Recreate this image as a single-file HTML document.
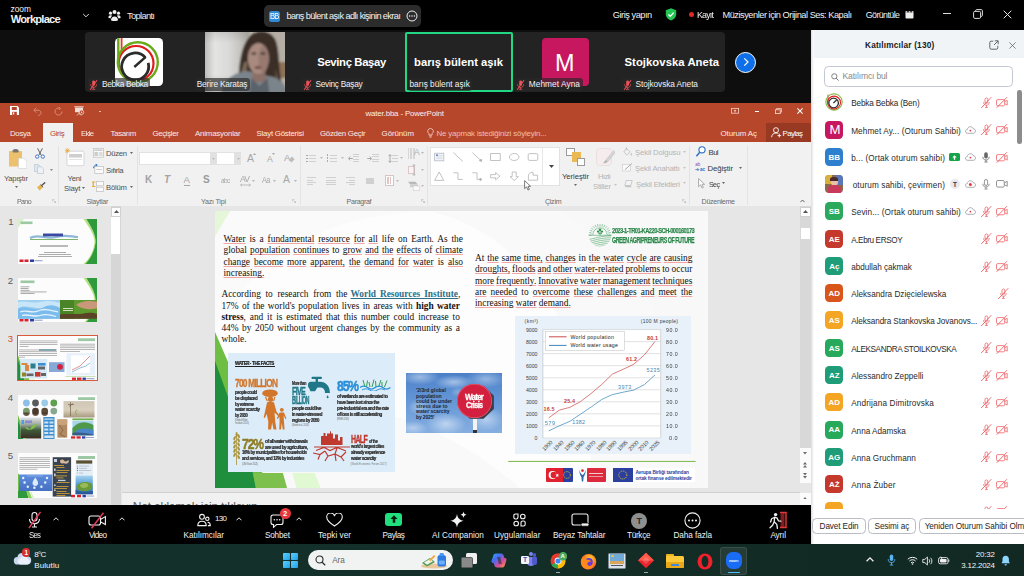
<!DOCTYPE html>
<html><head><meta charset="utf-8">
<style>
*{box-sizing:border-box;margin:0;padding:0}
html,body{width:1024px;height:576px;overflow:hidden;background:#0e0e0e;font-family:"Liberation Sans",sans-serif}
.a{position:absolute}
#root{position:relative;width:1024px;height:576px;overflow:hidden;background:#0e0e0e}
.t{position:absolute;white-space:nowrap;line-height:1}
.sq{text-decoration:underline;text-decoration-color:rgba(235,80,80,.5);text-decoration-thickness:.75px;text-underline-offset:1.3px;text-decoration-skip-ink:none}
</style></head><body>
<div id="root">
<!-- sec_top -->
<div class="a" style="left:0px;top:0px;width:1024px;height:30px;background:#000;"></div>
<div class="t" style="left:10.50px;top:5.00px;font-size:8.4px;color:#f2f2f2;letter-spacing:-0.014px;">zoom</div>
<div class="t" style="left:10.75px;top:14.00px;font-size:11.2px;color:#f2f2f2;font-weight:bold;letter-spacing:-0.805px;">Workplace</div>
<svg class="a" style="left:82px;top:13px" width="8" height="6" viewBox="0 0 8 6"><path d="M1.200 1l2.800 2.800 2.800-2.800" fill="none" stroke="#ddd" stroke-width="1"/></svg>
<svg class="a" style="left:108px;top:9px" width="13" height="13" viewBox="0 0 13 13"><g fill="#f0f0f0"><circle cx="6.500" cy="3" r="2"/><circle cx="2.500" cy="4.200" r="1.600"/><circle cx="10.500" cy="4.200" r="1.600"/><path d="M3 11.300c0-2.300 1.400-3.800 3.500-3.800s3.500 1.500 3.500 3.800c0 .9-7 .9-7 0z"/><path d="M.4 8.600c0-1.600 1-2.400 2.200-2.400.7 0 1.300.2 1.700.6-.9.600-1.600 1.600-1.800 2.700-.9 0-2.100-.2-2.100-.9zM12.600 8.600c0-1.600-1-2.400-2.200-2.400-.7 0-1.300.2-1.700.6.900.6 1.600 1.600 1.800 2.700.9 0 2.100-.2 2.100-.9z"/></g></svg>
<div class="t" style="left:127.00px;top:11.00px;font-size:9.4px;color:#ececec;letter-spacing:-0.703px;">Toplantı</div>
<div class="a" style="left:263.5px;top:4.5px;width:157.5px;height:22.5px;background:#2c2c2c;border-radius:5px"></div>
<div class="a" style="left:269px;top:10.500px;width:11px;height:11px;background:#2f8ad8;border-radius:2.500px"></div>
<div class="t" style="left:270.00px;top:13.00px;font-size:8.2px;color:#fff;letter-spacing:-0.738px;transform:scaleX(0.9215);transform-origin:0 0;">BB</div>
<div class="t" style="left:286.50px;top:12.00px;font-size:9.2px;color:#f2f2f2;letter-spacing:-0.615px;">barış bülent aşık adlı kişinin ekraı</div>
<svg class="a" style="left:405.500px;top:10px" width="12" height="12" viewBox="0 0 12 12"><circle cx="6" cy="6" r="5" fill="none" stroke="#eee" stroke-width="1"/><circle cx="3.600" cy="6" r=".75" fill="#eee"/><circle cx="6" cy="6" r=".75" fill="#eee"/><circle cx="8.400" cy="6" r=".75" fill="#eee"/></svg>
<div class="t" style="left:612.75px;top:11.00px;font-size:9.2px;color:#f2f2f2;letter-spacing:-0.447px;">Giriş yapın</div>
<svg class="a" style="left:665px;top:8px" width="12" height="13" viewBox="0 0 12 13"><path d="M6 .3l5.200 1.900v4c0 3-2.300 5.300-5.200 6.300-2.900-1-5.200-3.300-5.200-6.300v-4z" fill="#23c552"/><path d="M3.400 6.400l1.900 1.900 3.400-3.700" fill="none" stroke="#fff" stroke-width="1.400"/></svg>
<div class="a" style="left:688.5px;top:11.8px;width:5.4px;height:5.4px;background:#e02828;border-radius:50%"></div>
<div class="t" style="left:696.50px;top:11.00px;font-size:9.2px;color:#f2f2f2;letter-spacing:-0.828px;transform:scaleX(0.9630);transform-origin:0 0;">Kayıt</div>
<div class="t" style="left:722.50px;top:11.00px;font-size:9.2px;color:#f2f2f2;letter-spacing:-0.458px;">Müzisyenler için Orijinal Ses: Kapalı</div>
<div class="t" style="left:865.75px;top:11.00px;font-size:8.8px;color:#f2f2f2;letter-spacing:-0.550px;">Görüntüle</div>
<svg class="a" style="left:905px;top:10.500px" width="9" height="8" viewBox="0 0 9 8"><rect x=".5" y="1.500" width="8" height="6" rx=".8" fill="#eee"/><rect x=".5" y=".2" width="1.800" height="1.500" fill="#eee"/><rect x="3.600" y=".2" width="1.800" height="1.500" fill="#eee"/><rect x="6.700" y=".2" width="1.800" height="1.500" fill="#eee"/></svg>
<div class="a" style="left:943px;top:13.3px;width:8px;height:1px;background:#ddd;"></div>
<svg class="a" style="left:972.500px;top:9px" width="10" height="10" viewBox="0 0 10 10"><rect x=".6" y="2.400" width="7" height="7" rx="1.200" fill="none" stroke="#ddd" stroke-width="1"/><path d="M2.600 2.200v-.6c0-.5.400-1 1-1h4.800c.5 0 1 .4 1 1v4.800c0 .5-.4 1-1 1h-.6" fill="none" stroke="#ddd" stroke-width="1"/></svg>
<svg class="a" style="left:1003px;top:9.500px" width="9" height="9" viewBox="0 0 9 9"><path d="M.7.700l7.600 7.600M8.300.7L.7 8.300" stroke="#e8e8e8" stroke-width="1"/></svg>
<!-- sec_gal -->
<div class="a" style="left:85px;top:32px;width:640px;height:60px;background:#232323;border-radius:4px"></div>
<div class="a" style="left:114.900px;top:38px;width:48.200px;height:47.900px;background:#fff;border-radius:4.500px;overflow:hidden"><svg width="48.200" height="47.900" viewBox="0 0 48.200 47.900"><path d="M6.600 0v12.400" stroke="#e8382a" stroke-width="1.800"/><circle cx="21.100" cy="25.400" r="17.400" fill="none" stroke="#e01b1b" stroke-width="2.200"/><path d="M3.300 0v29" stroke="#6aaa1a" stroke-width="2.400"/><circle cx="22.800" cy="24.200" r="20" fill="none" stroke="#6aaa1a" stroke-width="2.400"/><path d="M33.240 24.900A13.500 13.500 0 1 1 30.230 19.370" fill="none" stroke="#2b2b2b" stroke-width="2.800"/><path d="M19.300 29L30.800 18.800" stroke="#2b2b2b" stroke-width="2.400"/></svg></div>
<svg class="a" style="left:204.800px;top:32px" width="80.600" height="60" viewBox="0 0 80 60" preserveAspectRatio="none"><defs><linearGradient id="cur" x1="0" x2="1" y1="0" y2="0"><stop offset="0" stop-color="#b4b4b2"/><stop offset=".25" stop-color="#e4e4e4"/><stop offset=".55" stop-color="#dadad8"/><stop offset=".8" stop-color="#c6c4c0"/><stop offset="1" stop-color="#b0aca4"/></linearGradient><linearGradient id="curv" x1="0" x2="0" y1="0" y2="1"><stop offset="0" stop-color="#000" stop-opacity=".12"/><stop offset=".2" stop-color="#000" stop-opacity="0"/><stop offset=".7" stop-color="#000" stop-opacity="0"/><stop offset="1" stop-color="#000" stop-opacity=".22"/></linearGradient><filter id="bl" x="-10%" y="-10%" width="120%" height="120%"><feGaussianBlur stdDeviation="1"/></filter><clipPath id="vc"><rect x="0" y="0" width="80" height="60"/></clipPath></defs><g clip-path="url(#vc)"><rect width="80" height="60" fill="#b9b5ad"/><g filter="url(#bl)"><rect x="-2" y="-2" width="46" height="64" fill="url(#cur)"/><rect x="-2" y="-2" width="46" height="64" fill="url(#curv)"/><rect x="62" y="-2" width="20" height="64" fill="#b4aea4"/><rect x="72" y="30" width="10" height="16" fill="#8c7256"/><path d="M34 62C32 40 35 16 43 6 50-3 65-3 70 8 75 20 72 42 79 62Z" fill="#3a2f28"/><path d="M39 30C36 40 33 50 31 62L40 62C40 50 41 40 42 30Z" fill="#7d6a58"/><path d="M70 36C72 46 74 52 78 62L70 62Z" fill="#6a5a4c"/><path d="M16 62C18 47 30 40 42 39L62 44C72 45 80 50 82 62Z" fill="#7c848b"/><rect x="47" y="38" width="13" height="12" fill="#8a7066"/><path d="M46 46L54 54 62 46 64 62 44 62Z" fill="#5a626a"/><ellipse cx="53" cy="26.500" rx="10.500" ry="15.500" fill="#a88a7f"/><ellipse cx="58" cy="27" rx="5" ry="13" fill="#97796f"/><ellipse cx="48.500" cy="21.500" rx="2.600" ry="1.200" fill="#4a3a36"/><ellipse cx="57.500" cy="21.500" rx="2.600" ry="1.200" fill="#4a3a36"/><ellipse cx="52.500" cy="35.500" rx="3.400" ry="1.300" fill="#6e423e"/><path d="M43 14C46 6 60 4 65 14 60 9 50 9 43 14Z" fill="#3a2f28"/></g></g></svg>
<div class="a" style="left:87.5px;top:78.2px;width:62.5px;height:13px;background:rgba(40,40,40,.66);border-radius:3px"></div>
<svg class="a" style="left:89.0px;top:79.600px" width="9" height="10" viewBox="0 0 9 10"><g><rect x="3.200" y=".6" width="2.800" height="5.200" rx="1.400" fill="#ee5358"/><path d="M1.600 4.300c0 2 1.300 3 3 3s3-1 3-3M4.600 7.300v1.900M3 9.300h3.200" fill="none" stroke="#ee5358" stroke-width=".8"/><path d="M8 .3L1.200 9.700" stroke="#ee5358" stroke-width="1.100"/></g></svg>
<div class="t" style="left:102.00px;top:80.00px;font-size:8.3px;color:#f2f2f2;letter-spacing:-0.313px;">Bebka Bebka</div>
<div class="a" style="left:194.5px;top:78.2px;width:55.5px;height:13px;background:rgba(40,40,40,.66);border-radius:3px"></div>
<div class="t" style="left:196.75px;top:80.00px;font-size:8.3px;color:#f2f2f2;letter-spacing:-0.177px;">Berire Karataş</div>
<div class="a" style="left:301px;top:78.2px;width:64px;height:13px;background:rgba(40,40,40,.66);border-radius:3px"></div>
<svg class="a" style="left:302.5px;top:79.600px" width="9" height="10" viewBox="0 0 9 10"><g><rect x="3.200" y=".6" width="2.800" height="5.200" rx="1.400" fill="#ee5358"/><path d="M1.600 4.300c0 2 1.300 3 3 3s3-1 3-3M4.600 7.300v1.900M3 9.300h3.200" fill="none" stroke="#ee5358" stroke-width=".8"/><path d="M8 .3L1.200 9.700" stroke="#ee5358" stroke-width="1.100"/></g></svg>
<div class="t" style="left:315.50px;top:80.00px;font-size:8.3px;color:#f2f2f2;letter-spacing:-0.276px;">Sevinç Başay</div>
<div class="t" style="left:317.25px;top:57.00px;font-size:11.3px;color:#fff;font-weight:bold;letter-spacing:-0.352px;">Sevinç Başay</div>
<div class="a" style="left:405px;top:32px;width:108px;height:60px;border:2px solid #22d784;border-radius:2px"></div>
<div class="t" style="left:414.00px;top:57.00px;font-size:11.3px;color:#fff;font-weight:bold;letter-spacing:-0.011px;">barış bülent aşık</div>
<div class="a" style="left:407.5px;top:78.2px;width:64.5px;height:13px;background:rgba(40,40,40,.66);border-radius:3px"></div>
<div class="t" style="left:409.50px;top:80.00px;font-size:8.3px;color:#f2f2f2;letter-spacing:-0.025px;">barış bülent aşık</div>
<div class="a" style="left:541.5px;top:38px;width:47.5px;height:48px;background:#c7175e;border-radius:4px"></div>
<div class="t" style="left:555.00px;top:52.00px;font-size:23.4px;color:#fff;letter-spacing:1.257px;">M</div>
<div class="a" style="left:514px;top:78.2px;width:69px;height:13px;background:rgba(40,40,40,.66);border-radius:3px"></div>
<svg class="a" style="left:515.5px;top:79.600px" width="9" height="10" viewBox="0 0 9 10"><g><rect x="3.200" y=".6" width="2.800" height="5.200" rx="1.400" fill="#ee5358"/><path d="M1.600 4.300c0 2 1.300 3 3 3s3-1 3-3M4.600 7.300v1.900M3 9.300h3.200" fill="none" stroke="#ee5358" stroke-width=".8"/><path d="M8 .3L1.200 9.700" stroke="#ee5358" stroke-width="1.100"/></g></svg>
<div class="t" style="left:528.75px;top:80.00px;font-size:8.3px;color:#f2f2f2;letter-spacing:0.065px;">Mehmet Ayna</div>
<div class="t" style="left:624.50px;top:57.00px;font-size:11.3px;color:#fff;font-weight:bold;letter-spacing:0.048px;">Stojkovska Aneta</div>
<div class="a" style="left:621px;top:78.2px;width:79.75px;height:13px;background:rgba(40,40,40,.66);border-radius:3px"></div>
<svg class="a" style="left:622.5px;top:79.600px" width="9" height="10" viewBox="0 0 9 10"><g><rect x="3.200" y=".6" width="2.800" height="5.200" rx="1.400" fill="#ee5358"/><path d="M1.600 4.300c0 2 1.300 3 3 3s3-1 3-3M4.600 7.300v1.900M3 9.300h3.200" fill="none" stroke="#ee5358" stroke-width=".8"/><path d="M8 .3L1.200 9.700" stroke="#ee5358" stroke-width="1.100"/></g></svg>
<div class="t" style="left:635.50px;top:80.00px;font-size:8.3px;color:#f2f2f2;letter-spacing:-0.078px;">Stojkovska Aneta</div>
<div class="a" style="left:734.500px;top:51.500px;width:21px;height:21px;border-radius:50%;background:#0e6fe8;border:1.500px solid #fff"></div>
<svg class="a" style="left:741.500px;top:57px" width="8" height="10" viewBox="0 0 8 10"><path d="M2.300 1.300l3.700 3.700-3.700 3.700" fill="none" stroke="#fff" stroke-width="1.200"/></svg>
<!-- sec_ppt -->
<div class="a" style="left:0px;top:102.8px;width:810.5px;height:40px;background:#b7472a;"></div>
<div class="a" style="left:0px;top:142.2px;width:810.5px;height:63.6px;background:#f1f1f1;"></div>
<div class="a" style="left:0px;top:205.6px;width:810.5px;height:0.8px;background:#dcdcdc;"></div>
<div class="a" style="left:0px;top:206.4px;width:810.5px;height:298.6px;background:#e6e6e6;"></div>
<svg class="a" style="left:10.400px;top:106.400px" width="9" height="9" viewBox="0 0 9 9"><path d="M0 0h7.500l1.500 1.500v7.500h-9z" fill="#fff"/><rect x="1.800" y="1" width="5" height="3" fill="#b7472a"/><rect x="2.200" y="5.800" width="4.600" height="3.200" fill="#b7472a"/><rect x="3" y="6.400" width="1.200" height="2" fill="#fff"/></svg>
<svg class="a" style="left:33px;top:106.500px" width="9" height="9" viewBox="0 0 9 9"><path d="M3.200.8L.8 3.200l2.400 2.400M1 3.200h4.200c1.600 0 2.800 1.200 2.800 2.600s-1.200 2.600-2.800 2.600" fill="none" stroke="#d88c76" stroke-width="1"/></svg>
<svg class="a" style="left:54px;top:106.500px" width="9" height="9" viewBox="0 0 9 9"><path d="M5.500 1.200a3.500 3.500 0 1 0 2.500 3.300M4.600.2l1.800 1.100-1.200 1.700" fill="none" stroke="#d88c76" stroke-width="1"/></svg>
<svg class="a" style="left:74.400px;top:106px" width="11" height="10" viewBox="0 0 11 10"><path d="M.3.800h9.400" stroke="#f3ddd6" stroke-width="1"/><rect x="1" y="1.600" width="8" height="4.600" fill="#f3ddd6"/><path d="M5 6.200v1.200M3 9.500l2-2.200 2 2.200" stroke="#f3ddd6" stroke-width=".8" fill="none"/><circle cx="7.600" cy="6.300" r="2.200" fill="#b7472a" stroke="#f3ddd6" stroke-width=".7"/><path d="M7 5.200l1.600 1.100-1.600 1.100z" fill="#f3ddd6"/></svg>
<div class="a" style="left:99.4px;top:110.6px;width:1.3px;height:1.3px;background:#f0d0c6;border-radius:50%"></div>
<div class="t" style="left:365.50px;top:110.00px;font-size:7.9px;color:#fbeeea;letter-spacing:-0.151px;">water.bba - PowerPoint</div>
<svg class="a" style="left:731px;top:108.400px" width="8" height="6" viewBox="0 0 8 6"><rect x=".4" y=".4" width="7.200" height="4.800" fill="none" stroke="#f0cdc3" stroke-width=".8"/><path d="M4 1.500l1.500 1.600h-3zM3.500 3h1v1.400h-1z" fill="#f0cdc3"/></svg>
<div class="a" style="left:754.6px;top:111px;width:4.2px;height:1px;background:#fff;"></div>
<svg class="a" style="left:775px;top:108px" width="7" height="6" viewBox="0 0 7 6"><rect x=".4" y="1.800" width="4.800" height="3.800" fill="none" stroke="#f6ddd6" stroke-width=".8"/><path d="M1.600 1.600v-1.200h4.800v3.800h-1.200" fill="none" stroke="#f6ddd6" stroke-width=".8"/></svg>
<svg class="a" style="left:796.500px;top:108px" width="6" height="6" viewBox="0 0 6 6"><path d="M.4.400l5.200 5.200M5.600.4L.4 5.600" stroke="#fff" stroke-width="1.100"/></svg>
<div class="a" style="left:42.6px;top:123px;width:30.4px;height:19.5px;background:#f1f1f1;"></div>
<div class="t" style="left:10.00px;top:130.00px;font-size:7.9px;color:#fbe9e4;letter-spacing:-0.348px;">Dosya</div>
<div class="t" style="left:50.00px;top:130.00px;font-size:7.9px;color:#b7472a;letter-spacing:-0.409px;">Giriş</div>
<div class="t" style="left:81.00px;top:130.00px;font-size:7.9px;color:#fbe9e4;letter-spacing:-0.711px;transform:scaleX(0.9822);transform-origin:0 0;">Ekle</div>
<div class="t" style="left:110.60px;top:130.00px;font-size:7.9px;color:#fbe9e4;letter-spacing:-0.382px;">Tasarım</div>
<div class="t" style="left:152.40px;top:130.00px;font-size:7.9px;color:#fbe9e4;letter-spacing:-0.339px;">Geçişler</div>
<div class="t" style="left:195.00px;top:130.00px;font-size:7.9px;color:#fbe9e4;letter-spacing:-0.206px;">Animasyonlar</div>
<div class="t" style="left:256.60px;top:130.00px;font-size:7.9px;color:#fbe9e4;letter-spacing:-0.252px;">Slayt Gösterisi</div>
<div class="t" style="left:320.00px;top:130.00px;font-size:7.9px;color:#fbe9e4;letter-spacing:-0.285px;">Gözden Geçir</div>
<div class="t" style="left:381.60px;top:130.00px;font-size:7.9px;color:#fbe9e4;letter-spacing:-0.089px;">Görünüm</div>
<svg class="a" style="left:427px;top:128px" width="7" height="10" viewBox="0 0 7 10"><path d="M3.500.5a2.800 2.800 0 0 0-1.600 5.100v1.400h3.200v-1.400a2.800 2.800 0 0 0-1.600-5.100zM2.200 8h2.600M2.600 9.200h1.800" fill="none" stroke="#f3d5cc" stroke-width=".8"/></svg>
<div class="t" style="left:436.60px;top:130.00px;font-size:7.9px;color:#eebfb1;letter-spacing:-0.179px;">Ne yapmak istediğinizi söyleyin...</div>
<div class="t" style="left:720.60px;top:130.00px;font-size:7.9px;color:#fbe9e4;letter-spacing:-0.115px;">Oturum Aç</div>
<div class="a" style="left:766px;top:123px;width:44.5px;height:19px;background:#983a23;"></div>
<svg class="a" style="left:770.500px;top:126.500px" width="11" height="11" viewBox="0 0 11 11"><circle cx="5" cy="3.200" r="2.500" fill="none" stroke="#fff" stroke-width=".9"/><path d="M.6 10.200c.2-2.600 1.800-4.200 4.400-4.200 1 0 1.800.2 2.400.6M8.300 6.800v3.600M6.500 8.600h3.600" fill="none" stroke="#fff" stroke-width=".9"/></svg>
<div class="t" style="left:782.60px;top:130.00px;font-size:7.9px;color:#fff;letter-spacing:-0.662px;">Paylaş</div>
<div class="a" style="left:58px;top:146px;width:0.9px;height:58.5px;background:#e3e3e3;"></div>
<div class="a" style="left:136.6px;top:146px;width:0.9px;height:58.5px;background:#e3e3e3;"></div>
<div class="a" style="left:300px;top:146px;width:0.9px;height:58.5px;background:#e3e3e3;"></div>
<div class="a" style="left:427px;top:146px;width:0.9px;height:58.5px;background:#e3e3e3;"></div>
<div class="a" style="left:689.4px;top:146px;width:0.9px;height:58.5px;background:#e3e3e3;"></div>
<div class="a" style="left:747.4px;top:146px;width:0.9px;height:58.5px;background:#e3e3e3;"></div>
<div class="t" style="left:17.00px;top:199.00px;font-size:7.1px;color:#6a6a6a;letter-spacing:-0.639px;transform:scaleX(0.9955);transform-origin:0 0;">Pano</div>
<div class="t" style="left:86.40px;top:199.00px;font-size:7.1px;color:#6a6a6a;letter-spacing:-0.239px;">Slaytlar</div>
<div class="t" style="left:201.00px;top:199.00px;font-size:7.1px;color:#6a6a6a;letter-spacing:-0.213px;">Yazı Tipi</div>
<div class="t" style="left:346.60px;top:199.00px;font-size:7.1px;color:#6a6a6a;letter-spacing:-0.319px;">Paragraf</div>
<div class="t" style="left:545.00px;top:199.00px;font-size:7.1px;color:#6a6a6a;letter-spacing:-0.287px;">Çizim</div>
<div class="t" style="left:701.60px;top:199.00px;font-size:7.1px;color:#6a6a6a;letter-spacing:-0.314px;">Düzenleme</div>
<svg class="a" style="left:51.6px;top:199.4px" width="4" height="4" viewBox="0 0 4 4"><path d="M.3 2.500v-2.200h2.200M1.500 1.500l2 2M3.700 2v1.700h-1.700" fill="none" stroke="#b0b0b0" stroke-width=".6"/></svg>
<svg class="a" style="left:292.4px;top:199.4px" width="4" height="4" viewBox="0 0 4 4"><path d="M.3 2.500v-2.200h2.200M1.500 1.500l2 2M3.700 2v1.700h-1.700" fill="none" stroke="#b0b0b0" stroke-width=".6"/></svg>
<svg class="a" style="left:420.6px;top:199.4px" width="4" height="4" viewBox="0 0 4 4"><path d="M.3 2.500v-2.200h2.200M1.500 1.500l2 2M3.700 2v1.700h-1.700" fill="none" stroke="#b0b0b0" stroke-width=".6"/></svg>
<svg class="a" style="left:682px;top:199.4px" width="4" height="4" viewBox="0 0 4 4"><path d="M.3 2.500v-2.200h2.200M1.500 1.500l2 2M3.700 2v1.700h-1.700" fill="none" stroke="#b0b0b0" stroke-width=".6"/></svg>
<svg class="a" style="left:799.500px;top:199px" width="5" height="4" viewBox="0 0 5 4"><path d="M.4 3.200l2.100-2.200 2.100 2.200" fill="none" stroke="#555" stroke-width=".9"/></svg>
<svg class="a" style="left:9px;top:148.500px" width="18" height="20" viewBox="0 0 18 20"><rect x="0" y="2" width="13" height="15.500" rx=".6" fill="#ecc06c"/><rect x="3.600" y=".6" width="6" height="3" rx=".8" fill="#777"/><rect x="5.400" y="0" width="2.400" height="1.600" fill="#777"/><path d="M9.500 9.200h5.200l3 3v7.300h-8.200z" fill="#fff" stroke="#c8c8c8" stroke-width=".5"/></svg>
<div class="t" style="left:4.00px;top:175.00px;font-size:7.7px;color:#505050;letter-spacing:-0.280px;">Yapıştır</div>
<svg class="a" style="left:14.899999999999999px;top:186.4px" width="3" height="2" viewBox="0 0 3 2"><path d="M0 0h3l-1.500 2z" fill="#666"/></svg>
<svg class="a" style="left:35px;top:147.600px" width="10" height="11" viewBox="0 0 10 11"><path d="M2.600.3l3.600 7M7.400.3l-3.600 7" stroke="#555" stroke-width=".9"/><circle cx="2.200" cy="8.600" r="1.700" fill="none" stroke="#3b6fc4" stroke-width=".9"/><circle cx="7.800" cy="8.600" r="1.700" fill="none" stroke="#3b6fc4" stroke-width=".9"/></svg>
<svg class="a" style="left:34px;top:164.400px" width="10" height="10" viewBox="0 0 10 10"><path d="M.5.500h4l2 2v5h-6z" fill="#dfe6ee" stroke="#b4c0cf" stroke-width=".6"/><path d="M3.500 2.800h4l2 2v4.700h-6z" fill="#eef2f6" stroke="#b4c0cf" stroke-width=".6"/></svg>
<svg class="a" style="left:49.5px;top:168.6px" width="3" height="2" viewBox="0 0 3 2"><path d="M0 0h3l-1.500 2z" fill="#888"/></svg>
<svg class="a" style="left:35.600px;top:182px" width="10" height="9" viewBox="0 0 10 9"><path d="M9.200.4l-3.600 3.200" stroke="#555" stroke-width="1.400"/><path d="M1 5.200l3.600-2.600 2.400 2.600-3.400 3.400z" fill="#e7b34f"/><path d="M4.600 2.600l2.400 2.600" stroke="#555" stroke-width="1"/></svg>
<svg class="a" style="left:64.500px;top:147.500px" width="20" height="19" viewBox="0 0 20 19"><rect x="2" y="3.200" width="17" height="14.500" rx="1" fill="#fff" stroke="#c9c9c9" stroke-width=".7"/><rect x="4" y="6" width="13" height="3.600" fill="#cfcfcf"/><rect x="4" y="11" width="13" height=".8" fill="#ddd"/><path d="M2.200 0v5.500M-.4 2.700h5.400M.4.800l3.800 3.800M4.200.8L.4 4.600" stroke="#e9a93a" stroke-width=".8"/></svg>
<div class="t" style="left:67.60px;top:175.00px;font-size:7.7px;color:#505050;letter-spacing:-0.235px;">Yeni</div>
<div class="t" style="left:64.00px;top:185.00px;font-size:7.7px;color:#505050;letter-spacing:-0.180px;">Slayt</div>
<svg class="a" style="left:82.1px;top:186.6px" width="3" height="2" viewBox="0 0 3 2"><path d="M0 0h3l-1.500 2z" fill="#666"/></svg>
<svg class="a" style="left:93px;top:148.400px" width="11" height="10" viewBox="0 0 11 10"><rect x=".4" y=".4" width="10.200" height="8.800" fill="#fafafa" stroke="#bdbdbd" stroke-width=".7"/><rect x="1.400" y="1.400" width="8.200" height="1.600" fill="#ccc"/><rect x="1.400" y="4" width="3.500" height="4" fill="#ccc"/><rect x="5.800" y="4" width="3.800" height="4" fill="#dcdcdc"/></svg>
<div class="t" style="left:106.00px;top:150.00px;font-size:7.7px;color:#505050;letter-spacing:-0.315px;">Düzen</div>
<svg class="a" style="left:129.5px;top:151.8px" width="3" height="2" viewBox="0 0 3 2"><path d="M0 0h3l-1.500 2z" fill="#666"/></svg>
<svg class="a" style="left:93px;top:164.400px" width="11" height="10" viewBox="0 0 11 10"><rect x="1.800" y="2.400" width="8.600" height="7" fill="#fafafa" stroke="#bdbdbd" stroke-width=".7"/><rect x="3.400" y="5" width="5.400" height="1" fill="#ccc"/><path d="M.6 4.200c0-2.200 1.600-3.400 3.400-3.400M2.600.1l1.600.8-1 1.400" fill="none" stroke="#2f71c2" stroke-width="1"/></svg>
<div class="t" style="left:106.00px;top:167.00px;font-size:7.7px;color:#505050;letter-spacing:-0.419px;">Sıfırla</div>
<svg class="a" style="left:92.400px;top:181px" width="12" height="11" viewBox="0 0 12 11"><rect x="4.400" y=".4" width="7" height="4.400" fill="#fafafa" stroke="#bdbdbd" stroke-width=".7"/><rect x="4.400" y="6.200" width="7" height="4.400" fill="#fafafa" stroke="#bdbdbd" stroke-width=".7"/><path d="M0 1h3.400M0 5.500h3.400" stroke="#e9a93a" stroke-width="1"/><rect x=".6" y="1" width="1.200" height="4.500" fill="#e9a93a"/></svg>
<div class="t" style="left:106.00px;top:184.00px;font-size:7.7px;color:#505050;letter-spacing:-0.207px;">Bölüm</div>
<svg class="a" style="left:129.5px;top:185.6px" width="3" height="2" viewBox="0 0 3 2"><path d="M0 0h3l-1.500 2z" fill="#666"/></svg>
<div class="a" style="left:138.6px;top:151.6px;width:72.6px;height:13.8px;background:#fff;border:.5px solid #e2e2e2"></div>
<div class="a" style="left:211px;top:151.6px;width:4.6px;height:13.8px;background:#e1e1e1;"></div>
<div class="a" style="left:216px;top:151.6px;width:19.2px;height:13.8px;background:#fff;border:.5px solid #e2e2e2"></div>
<div class="a" style="left:235.2px;top:151.6px;width:5.4px;height:13.8px;background:#e1e1e1;"></div>
<svg class="a" style="left:211.8px;top:157.6px" width="3" height="2" viewBox="0 0 3 2"><path d="M0 0h3l-1.500 2z" fill="#bdbdbd"/></svg>
<svg class="a" style="left:236.5px;top:157.6px" width="3" height="2" viewBox="0 0 3 2"><path d="M0 0h3l-1.500 2z" fill="#bdbdbd"/></svg>
<div class="t" style="left:247.00px;top:153.00px;font-size:10.5px;color:#a6a6a6;letter-spacing:-0.604px;">A</div>
<svg class="a" style="left:252.600px;top:152.500px" width="3" height="2" viewBox="0 0 3 2"><path d="M0 2h3l-1.500-2z" fill="#a6a6a6"/></svg>
<div class="t" style="left:267.00px;top:155.00px;font-size:8.6px;color:#a6a6a6;letter-spacing:-0.336px;">A</div>
<svg class="a" style="left:271.600px;top:153px" width="3" height="2" viewBox="0 0 3 2"><path d="M0 0h3l-1.500 2z" fill="#a6a6a6"/></svg>
<div class="t" style="left:284.00px;top:153.00px;font-size:9.5px;color:#a6a6a6;letter-spacing:-0.737px;">A</div>
<svg class="a" style="left:287.500px;top:156px" width="7" height="7" viewBox="0 0 7 7"><path d="M3.800.6l2.800 2.600-3 3.200-2.600-2.400z" fill="#bcbcbc"/></svg>
<div class="t" style="left:145.00px;top:175.00px;font-size:10px;color:#a3a3a3;font-weight:bold;letter-spacing:-0.822px;">K</div>
<div class="t" style="left:164.00px;top:175.00px;font-size:10px;color:#a3a3a3;font-weight:bold;font-style:italic;letter-spacing:0.891px;">T</div>
<div class="t" style="left:183.60px;top:175.00px;font-size:9.6px;color:#a6a6a6;letter-spacing:-0.404px;">A</div>
<div class="a" style="left:183.6px;top:184.6px;width:6px;height:0.8px;background:#a6a6a6;"></div>
<div class="t" style="left:203.00px;top:175.00px;font-size:10px;color:#9a9a9a;font-weight:bold;letter-spacing:-0.670px;">S</div>
<div class="t" style="left:220.60px;top:178.00px;font-size:6.8px;color:#a6a6a6;letter-spacing:-0.612px;transform:scaleX(0.9651);transform-origin:0 0;">abc</div>
<div class="t" style="left:240.00px;top:175.00px;font-size:9px;color:#a6a6a6;letter-spacing:-0.810px;transform:scaleX(0.9498);transform-origin:0 0;">AV</div>
<svg class="a" style="left:239.500px;top:183px" width="11" height="4" viewBox="0 0 11 4"><path d="M.6 2h9.800M2 .6L.6 2 2 3.400M9 .6l1.400 1.400L9 3.400" fill="none" stroke="#a6a6a6" stroke-width=".7"/></svg>
<svg class="a" style="left:252.1px;top:179.6px" width="3" height="2" viewBox="0 0 3 2"><path d="M0 0h3l-1.500 2z" fill="#b5b5b5"/></svg>
<div class="t" style="left:261.60px;top:176.00px;font-size:8.6px;color:#a6a6a6;letter-spacing:-0.774px;transform:scaleX(0.8619);transform-origin:0 0;">Aa</div>
<svg class="a" style="left:272.5px;top:179.6px" width="3" height="2" viewBox="0 0 3 2"><path d="M0 0h3l-1.500 2z" fill="#b5b5b5"/></svg>
<div class="t" style="left:283.00px;top:175.00px;font-size:10.4px;color:#a6a6a6;letter-spacing:-0.737px;">A</div>
<svg class="a" style="left:294.1px;top:179.6px" width="3" height="2" viewBox="0 0 3 2"><path d="M0 0h3l-1.500 2z" fill="#b5b5b5"/></svg>
<div class="a" style="left:306.4px;top:154.6px;width:1.2px;height:1.2px;background:#9c9c9c;border-radius:50%"></div>
<div class="a" style="left:306.4px;top:157.6px;width:1.2px;height:1.2px;background:#9c9c9c;border-radius:50%"></div>
<div class="a" style="left:306.4px;top:160.6px;width:1.2px;height:1.2px;background:#9c9c9c;border-radius:50%"></div>
<div class="a" style="left:309px;top:154.8px;width:7px;height:0.9px;background:#d0d0d0;"></div>
<div class="a" style="left:309px;top:157.8px;width:7px;height:0.9px;background:#d0d0d0;"></div>
<div class="a" style="left:309px;top:160.8px;width:7px;height:0.9px;background:#d0d0d0;"></div>
<svg class="a" style="left:319.5px;top:157.2px" width="3" height="2" viewBox="0 0 3 2"><path d="M0 0h3l-1.500 2z" fill="#bbb"/></svg>
<div class="a" style="left:327px;top:154.4px;width:1.2px;height:1.6px;background:#aaa;"></div>
<div class="a" style="left:327px;top:157.4px;width:1.2px;height:1.6px;background:#aaa;"></div>
<div class="a" style="left:327px;top:160.4px;width:1.2px;height:1.6px;background:#aaa;"></div>
<div class="a" style="left:330px;top:154.8px;width:7px;height:0.9px;background:#d0d0d0;"></div>
<div class="a" style="left:330px;top:157.8px;width:7px;height:0.9px;background:#d0d0d0;"></div>
<div class="a" style="left:330px;top:160.8px;width:7px;height:0.9px;background:#d0d0d0;"></div>
<svg class="a" style="left:340.5px;top:157.2px" width="3" height="2" viewBox="0 0 3 2"><path d="M0 0h3l-1.500 2z" fill="#bbb"/></svg>
<div class="a" style="left:352.5px;top:154.0px;width:6.5px;height:0.9px;background:#d0d0d0;"></div>
<div class="a" style="left:352.5px;top:156.3px;width:6.5px;height:0.9px;background:#d0d0d0;"></div>
<div class="a" style="left:352.5px;top:158.6px;width:6.5px;height:0.9px;background:#d0d0d0;"></div>
<div class="a" style="left:352.5px;top:160.9px;width:6.5px;height:0.9px;background:#d0d0d0;"></div>
<svg class="a" style="left:348.400px;top:155.500px" width="5" height="5" viewBox="0 0 5 5"><path d="M4.800 2.500h-4M2.200.6L.4 2.500l1.800 1.900" fill="none" stroke="#a8a8a8" stroke-width="1"/></svg>
<div class="a" style="left:372px;top:154.0px;width:6.5px;height:0.9px;background:#d0d0d0;"></div>
<div class="a" style="left:372px;top:156.3px;width:6.5px;height:0.9px;background:#d0d0d0;"></div>
<div class="a" style="left:372px;top:158.6px;width:6.5px;height:0.9px;background:#d0d0d0;"></div>
<div class="a" style="left:372px;top:160.9px;width:6.5px;height:0.9px;background:#d0d0d0;"></div>
<svg class="a" style="left:367.400px;top:155.500px" width="5" height="5" viewBox="0 0 5 5"><path d="M.2 2.500h4M2.800.6l1.800 1.900-1.800 1.900" fill="none" stroke="#a8a8a8" stroke-width="1"/></svg>
<svg class="a" style="left:387.500px;top:153.500px" width="4" height="9" viewBox="0 0 4 9"><path d="M2 .6v7.800M.5 2.200l1.500-1.600 1.500 1.600M.5 6.800l1.500 1.600 1.500-1.600" fill="none" stroke="#9a9a9a" stroke-width=".8"/></svg>
<div class="a" style="left:392px;top:154.8px;width:5.5px;height:0.9px;background:#d0d0d0;"></div>
<div class="a" style="left:392px;top:157.8px;width:5.5px;height:0.9px;background:#d0d0d0;"></div>
<div class="a" style="left:392px;top:160.8px;width:5.5px;height:0.9px;background:#d0d0d0;"></div>
<svg class="a" style="left:399.5px;top:157.2px" width="3" height="2" viewBox="0 0 3 2"><path d="M0 0h3l-1.500 2z" fill="#bbb"/></svg>
<div class="a" style="left:307.4px;top:177.4px;width:9px;height:0.9px;background:#d0d0d0;"></div>
<div class="a" style="left:307.4px;top:179.5px;width:6px;height:0.9px;background:#d0d0d0;"></div>
<div class="a" style="left:307.4px;top:181.6px;width:9px;height:0.9px;background:#d0d0d0;"></div>
<div class="a" style="left:307.4px;top:183.70000000000002px;width:6px;height:0.9px;background:#d0d0d0;"></div>
<div class="a" style="left:326.4px;top:177.4px;width:10px;height:0.9px;background:#d0d0d0;"></div>
<div class="a" style="left:326.4px;top:179.5px;width:10px;height:0.9px;background:#d0d0d0;"></div>
<div class="a" style="left:326.4px;top:181.6px;width:10px;height:0.9px;background:#d0d0d0;"></div>
<div class="a" style="left:326.4px;top:183.70000000000002px;width:10px;height:0.9px;background:#d0d0d0;"></div>
<div class="a" style="left:346px;top:177.4px;width:9px;height:0.9px;background:#d0d0d0;"></div>
<div class="a" style="left:349px;top:179.5px;width:6px;height:0.9px;background:#d0d0d0;"></div>
<div class="a" style="left:346px;top:181.6px;width:9px;height:0.9px;background:#d0d0d0;"></div>
<div class="a" style="left:349px;top:183.70000000000002px;width:6px;height:0.9px;background:#d0d0d0;"></div>
<div class="a" style="left:365.6px;top:177.6px;width:8px;height:6.4px;background:#d0d0d0;"></div>
<div class="a" style="left:385px;top:175.4px;width:8.6px;height:11px;background:#fdfdfd;border:.6px solid #d8c3c3"></div>
<div class="a" style="left:387px;top:177.4px;width:1.8px;height:7px;background:#e3c4c4;"></div>
<div class="a" style="left:389.6px;top:177.4px;width:1.8px;height:7px;background:#e3c4c4;"></div>
<svg class="a" style="left:396.1px;top:179.6px" width="3" height="2" viewBox="0 0 3 2"><path d="M0 0h3l-1.500 2z" fill="#bbb"/></svg>
<div class="a" style="left:408.0px;top:147.5px;width:0.7px;height:11px;background:#d6d6d6;"></div>
<div class="a" style="left:409.5px;top:147.5px;width:0.7px;height:11px;background:#d6d6d6;"></div>
<div class="a" style="left:411.0px;top:147.5px;width:0.7px;height:11px;background:#d6d6d6;"></div>
<div class="a" style="left:412.5px;top:147.5px;width:0.7px;height:11px;background:#d6d6d6;"></div>
<div class="a" style="left:414.0px;top:147.5px;width:0.7px;height:11px;background:#d6d6d6;"></div>
<div class="t" style="left:414.00px;top:148.00px;font-size:8.5px;color:#b0b0b0;letter-spacing:-0.070px;">A</div>
<svg class="a" style="left:420.9px;top:151.6px" width="3" height="2" viewBox="0 0 3 2"><path d="M0 0h3l-1.500 2z" fill="#bbb"/></svg>
<div class="a" style="left:408.4px;top:166px;width:7px;height:8px;background:#fbf3f3;border:.6px solid #dcc8c8"></div>
<svg class="a" style="left:411.500px;top:163.500px" width="4" height="12" viewBox="0 0 4 12"><path d="M2 .5v11M.6 2l1.400-1.500 1.400 1.500M.6 10l1.400 1.500 1.400-1.500" fill="none" stroke="#a9a9a9" stroke-width=".7"/></svg>
<svg class="a" style="left:420.9px;top:168.6px" width="3" height="2" viewBox="0 0 3 2"><path d="M0 0h3l-1.500 2z" fill="#bbb"/></svg>
<svg class="a" style="left:408px;top:181px" width="13" height="10" viewBox="0 0 13 10"><path d="M0 .8h7.500l2.200 2.800h-7.500z" fill="#b9b9b9"/><path d="M2 3.800h8v2.400h-8z" fill="#cfcfcf"/><rect x="5.200" y="5" width="6.600" height="4.400" fill="#fafafa" stroke="#d9c9c9" stroke-width=".6"/></svg>
<svg class="a" style="left:420.9px;top:185.4px" width="3" height="2" viewBox="0 0 3 2"><path d="M0 0h3l-1.500 2z" fill="#bbb"/></svg>
<div class="a" style="left:429.6px;top:147.4px;width:130.4px;height:38.8px;background:#fff;border:.8px solid #e2e2e2"></div>
<div class="a" style="left:542.4px;top:147.8px;width:0.8px;height:38px;background:#e6e6e6;"></div>
<svg class="a" style="left:549px;top:165px" width="5" height="3" viewBox="0 0 5 3"><path d="M0 0h5l-2.500 3z" fill="#444"/></svg>
<svg class="a" style="left:430px;top:148px" width="112" height="38" viewBox="430 148 112 38"><g fill="none" stroke="#b4b4b4" stroke-width=".8"><rect x="434.600" y="153.200" width="9.200" height="7.600" fill="#f4f6fa" stroke="#b5b9c4"/><path d="M436 155.400h6.400M436 157h6.400M436 158.600h6.400" stroke="#c8ccd6" stroke-width=".6"/><rect x="436" y="154.400" width="2" height="1.600" fill="#6d8fd0" stroke="none"/><path d="M453.400 152.600l9.400 8.800"/><path d="M472.400 152.600l9.200 8.600"/><path d="M481.800 161.400l-2.400-.6 1.800-1.800z" fill="#ababab"/><rect x="490.600" y="153.600" width="9.600" height="6.800"/><ellipse cx="514.200" cy="157" rx="4.800" ry="3.500"/><rect x="528.200" y="153.600" width="9.600" height="6.800" rx="1.200"/><path d="M439.200 172l4.600 8.400h-9.200z"/><path d="M453.400 172.800h4.600v6.600h4.800"/><path d="M472.400 172.800h4.600v6.600h4"/><path d="M482 179.400l-2-1.300v2.600z" fill="#ababab"/><path d="M490.600 174.600h5v-2l4.400 3.600-4.400 3.600v-2h-5z"/><path d="M512.200 172h4v4.600h2.200l-4.200 4-4.200-4h2.200z"/><path d="M528.400 180.200v-5.400c1.200-2.200 3.200-2.600 4.600-2.600v3h4.600v5z"/></g></svg>
<svg class="a" style="left:523.500px;top:179.500px" width="8" height="11" viewBox="0 0 8 11"><path d="M.6.600v8l2-1.800 1.400 3.200 1.400-.6-1.400-3.100h2.600z" fill="#fff" stroke="#444" stroke-width=".7"/></svg>
<div class="a" style="left:566.4px;top:148.2px;width:8.2px;height:8.2px;background:#fff;border:.7px solid #9a9a9a"></div>
<div class="a" style="left:571.6px;top:152.4px;width:9.4px;height:9.4px;background:#ebb954;"></div>
<div class="a" style="left:577px;top:158px;width:7.6px;height:7.8px;background:#fff;border:.7px solid #9a9a9a"></div>
<div class="t" style="left:562.00px;top:173.00px;font-size:7.7px;color:#3a3a3a;letter-spacing:-0.067px;">Yerleştir</div>
<svg class="a" style="left:574.1px;top:184.2px" width="3" height="2" viewBox="0 0 3 2"><path d="M0 0h3l-1.500 2z" fill="#666"/></svg>
<svg class="a" style="left:596px;top:148px" width="19" height="20" viewBox="0 0 19 20"><rect x=".5" y=".5" width="15" height="17" rx="3" fill="#f6ecee" stroke="#e4dcdc" stroke-width=".8"/><path d="M17.800 2.500l-8 9.500-1.200 3.200 3.200-1.400 7-8.800z" fill="#d4d4d4" stroke="#bdbdbd" stroke-width=".5"/><path d="M9.800 12l-3 3.500 4.800-1.800z" fill="#b0b0b0"/></svg>
<div class="t" style="left:598.00px;top:173.00px;font-size:7.7px;color:#b4b4b4;letter-spacing:-0.600px;">Hızlı</div>
<div class="t" style="left:593.00px;top:183.00px;font-size:7.7px;color:#b4b4b4;letter-spacing:-0.209px;">Stiller</div>
<svg class="a" style="left:613.5px;top:184.2px" width="3" height="2" viewBox="0 0 3 2"><path d="M0 0h3l-1.500 2z" fill="#c4c4c4"/></svg>
<svg class="a" style="left:623.400px;top:146.500px" width="10" height="10" viewBox="0 0 10 10"><path d="M3.400 1.200l3.600 3.600-3 3.400-3.200-3.200z" fill="none" stroke="#bfbfbf" stroke-width=".8"/><path d="M3.400.2v3" stroke="#bfbfbf" stroke-width=".8"/><path d="M8.400 5.600c.6 1 .9 1.600.9 2.100a.9.900 0 0 1-1.800 0c0-.5.300-1.100.9-2.100z" fill="#c9c9c9"/></svg>
<div class="t" style="left:635.00px;top:149.00px;font-size:7.7px;color:#b4b4b4;letter-spacing:-0.123px;">Şekil Dolgusu</div>
<svg class="a" style="left:682.9px;top:150.6px" width="3" height="2" viewBox="0 0 3 2"><path d="M0 0h3l-1.500 2z" fill="#c4c4c4"/></svg>
<svg class="a" style="left:622px;top:163px" width="11" height="9" viewBox="0 0 11 9"><rect x=".4" y="1.400" width="8" height="6.600" fill="#fafafa" stroke="#cfcfcf" stroke-width=".7"/><path d="M3 6.600l6.800-6" stroke="#a8a8a8" stroke-width="1"/></svg>
<div class="t" style="left:635.00px;top:165.00px;font-size:7.7px;color:#b4b4b4;letter-spacing:-0.161px;">Şekil Anahattı</div>
<svg class="a" style="left:682.9px;top:166.6px" width="3" height="2" viewBox="0 0 3 2"><path d="M0 0h3l-1.500 2z" fill="#c4c4c4"/></svg>
<svg class="a" style="left:624px;top:179.500px" width="9" height="8" viewBox="0 0 9 8"><path d="M2.200.5h6l-1.400 5h-6z" fill="#f4f4f4" stroke="#bcbcbc" stroke-width=".7"/><path d="M.8 5.500l1 1.800h5.600l-.6-1.800z" fill="#c4c4c4"/></svg>
<div class="t" style="left:636.00px;top:181.00px;font-size:7.7px;color:#b4b4b4;letter-spacing:-0.189px;">Şekil Efektleri</div>
<svg class="a" style="left:682.9px;top:182.4px" width="3" height="2" viewBox="0 0 3 2"><path d="M0 0h3l-1.500 2z" fill="#c4c4c4"/></svg>
<svg class="a" style="left:696px;top:146.400px" width="10" height="11" viewBox="0 0 10 11"><circle cx="6" cy="3.800" r="3.100" fill="#fff" stroke="#2e6fc0" stroke-width="1.100"/><path d="M3.800 6.200l-3.400 4" stroke="#2e6fc0" stroke-width="1.400"/></svg>
<div class="t" style="left:708.60px;top:149.00px;font-size:7.8px;color:#3a3a3a;letter-spacing:-0.637px;">Bul</div>
<svg class="a" style="left:694.600px;top:162.400px" width="11" height="10" viewBox="0 0 11 10"><text x=".2" y="4" font-size="4.600" font-family="Liberation Sans" fill="#8a4fb0">ab</text><text x="5" y="9.400" font-size="4.600" font-family="Liberation Sans" fill="#2e6fc0" font-weight="bold">ac</text><path d="M.4 7.600h3.200M2.400 6.200l1.400 1.400-1.400 1.400" fill="none" stroke="#2e6fc0" stroke-width=".8"/></svg>
<div class="t" style="left:707.60px;top:165.00px;font-size:7.8px;color:#3a3a3a;letter-spacing:-0.149px;">Değiştir</div>
<svg class="a" style="left:738.9px;top:167px" width="3" height="2" viewBox="0 0 3 2"><path d="M0 0h3l-1.500 2z" fill="#666"/></svg>
<svg class="a" style="left:697.500px;top:177.500px" width="8" height="11" viewBox="0 0 8 11"><path d="M.6.600v8l2-1.800 1.400 3.200 1.400-.6-1.400-3.100h2.600z" fill="#fff" stroke="#8c8c8c" stroke-width=".7"/></svg>
<div class="t" style="left:708.60px;top:181.00px;font-size:7.8px;color:#3a3a3a;letter-spacing:-0.702px;transform:scaleX(0.9139);transform-origin:0 0;">Seç</div>
<svg class="a" style="left:722.1px;top:182.2px" width="3" height="2" viewBox="0 0 3 2"><path d="M0 0h3l-1.500 2z" fill="#666"/></svg>
<!-- sec_slide -->
<div class="a" style="left:110.7px;top:206px;width:10.3px;height:299px;background:#d6d6d6;"></div>
<div class="a" style="left:110.7px;top:206.5px;width:10.3px;height:10.4px;background:#fdfdfd;border:.5px solid #d0d0d0"></div>
<svg class="a" style="left:113.500px;top:210px" width="5" height="3" viewBox="0 0 5 3"><path d="M0 3h5l-2.500-3z" fill="#555"/></svg>
<div class="a" style="left:111.2px;top:217px;width:9.3px;height:36.7px;background:#fff;"></div>
<div class="t" style="left:8.20px;top:217.00px;font-size:9.6px;color:#5a5a5a;">1</div>
<div class="t" style="left:7.80px;top:276.00px;font-size:9.6px;color:#5a5a5a;">2</div>
<div class="t" style="left:7.80px;top:334.00px;font-size:9.6px;color:#d0502c;">3</div>
<div class="t" style="left:7.80px;top:393.00px;font-size:9.6px;color:#5a5a5a;">4</div>
<div class="t" style="left:7.80px;top:451.00px;font-size:9.6px;color:#5a5a5a;">5</div>
<div class="a" style="left:17.600px;top:219.2px;width:79.600px;height:44.600px;background:#fcfcfc;overflow:hidden;"><svg class="a" style="left:0;top:0" width="80" height="45" viewBox="0 0 80 45"><path d="M65.500 0C74 12 77.500 19 76.300 25 75 34 71 40 65.500 45L68 45C73 40 76.500 34 77.300 25 78.500 19 76 12 68.400 0Z" fill="#b4e07c"/><path d="M68.400 0C76 12 78.500 19 77.300 25 76 34 72 40 67.500 45L80 45 80 0Z" fill="#2f9a3c"/><path d="M0 0h6l-6 9z" fill="#d8efc8"/><rect x="2.500" y="2.500" width="12" height="2.600" fill="#9cc9a4"/><path d="M12 19c8-5 16 2 26-1s16 0 22 0" stroke="#8fb7d9" stroke-width="2.200" fill="none"/><rect x="25" y="14.500" width="20" height="2.800" fill="#3b4aa0"/><path d="M12 20.500h48" stroke="#7fb56a" stroke-width="1"/><rect x="22" y="26.500" width="28" height="1" fill="#777"/><rect x="26" y="33" width="22" height=".8" fill="#999"/><rect x="21" y="35" width="32" height=".8" fill="#999"/><rect x="20" y="37" width="34" height=".8" fill="#999"/><rect x="1.500" y="40.500" width="4" height="2.500" fill="#d8232f"/><rect x="6.500" y="40.500" width="4" height="2.500" fill="#d8232f"/><rect x="12" y="40.500" width="4" height="2.500" fill="#2b3f9e"/><rect x="16.500" y="41.200" width="8" height="1" fill="#8e98c8"/></svg></div>
<div class="a" style="left:17.600px;top:277.6px;width:79.600px;height:44.600px;background:#fcfcfc;overflow:hidden;"><svg class="a" style="left:0;top:0" width="80" height="45" viewBox="0 0 80 45"><path d="M65.500 0C74 12 77.500 19 76.300 25 75 34 71 40 65.500 45L68 45C73 40 76.500 34 77.300 25 78.500 19 76 12 68.400 0Z" fill="#b4e07c"/><path d="M68.400 0C76 12 78.500 19 77.300 25 76 34 72 40 67.500 45L80 45 80 0Z" fill="#2f9a3c"/><rect x="2.500" y="2.500" width="14" height="2.600" fill="#9cc9a4"/><g fill="#888"><rect x="2.500" y="8.500" width="9" height=".7"/><rect x="2.500" y="10.200" width="8" height=".7"/><rect x="2.500" y="11.900" width="9" height=".7"/><rect x="2.500" y="13.600" width="26" height=".7"/><rect x="2.500" y="15.300" width="14" height=".7"/></g><rect x="0" y="22" width="42" height="18.800" fill="#9fd0f2"/><path d="M0 24c8-2 14 2 22 0s14-1 20 1v5c-8-3-14 1-22 0s-14-3-20 0z" fill="#c9e6f8"/><path d="M0 31c8-5 16 3 24-1s12-3 18 0v10.800h-42z" fill="#7bbcec"/><path d="M2 34c6-3 12 2 18-1s12-1 20 1M4 37.500c6-2 12 2 18 0s10-1 16 1" stroke="#e4f3fd" stroke-width="1.300" fill="none"/><rect x="42" y="22" width="38" height="18.800" fill="#5e9a2e"/><path d="M42 22h14v18.800h-14z" fill="#4a8426"/><path d="M42 36.500c8-1.500 16 .5 24-1s10 0 14 .5v4.800h-38z" fill="#5a4326"/><path d="M58 27c5-4 13-5 22-3v6c-8 2.500-15 1.500-22-3z" fill="#c9987a"/><rect x="45" y="30" width="10" height=".9" fill="#e4edd0"/><rect x="45" y="32" width="10" height=".9" fill="#e4edd0"/><rect x="1.500" y="41" width="4" height="2.500" fill="#d8232f"/><rect x="6.500" y="41" width="4" height="2.500" fill="#d8232f"/><rect x="12" y="41" width="4" height="2.500" fill="#2b3f9e"/><rect x="16.500" y="41.700" width="8" height="1" fill="#8e98c8"/></svg></div>
<div class="a" style="left:17.600px;top:335.8px;width:79.600px;height:44.600px;background:#fcfcfc;overflow:hidden;outline:1.500px solid #d85a36;outline-offset:.2px;"><svg class="a" style="left:0;top:0" width="80" height="45" viewBox="0 0 80 45"><g fill="#9a9a9a"><rect x="1.500" y="4.600" width="38" height=".7"/><rect x="1.500" y="6.400" width="38" height=".7"/><rect x="1.500" y="8.200" width="38" height=".7"/><rect x="1.500" y="10" width="9" height=".7"/><rect x="1" y="13.600" width="38" height=".7"/><rect x="1" y="15.400" width="38" height=".7"/><rect x="1" y="17.200" width="38" height=".7"/><rect x="1" y="19" width="38" height=".7"/><rect x="1" y="20.800" width="6" height=".7"/><rect x="42" y="7.800" width="35" height=".7"/><rect x="42" y="9.600" width="35" height=".7"/><rect x="42" y="11.400" width="35" height=".7"/><rect x="42" y="13.200" width="35" height=".7"/><rect x="42" y="15" width="20" height=".7"/></g><rect x="21" y="13.400" width="17" height="1.200" fill="#4f8499"/><rect x="60" y="2.300" width="17" height="2.800" fill="#9cc9a4"/><rect x="2" y="23" width="27.200" height="19.400" fill="#d6e9f6"/><g><rect x="3.500" y="27" width="6" height="2" fill="#d98a3e"/><rect x="7" y="29" width="4" height="6" fill="#d98a3e"/><rect x="12.500" y="27.500" width="5" height="5" fill="#2a7f8a"/><rect x="20" y="27" width="7.500" height="2.600" fill="#3c8ed2"/><rect x="20" y="30.500" width="7" height="3" fill="#666"/><rect x="4" y="36.500" width="4" height="4" fill="#94832a"/><rect x="8.500" y="37.500" width="7" height="2.600" fill="#666"/><rect x="17" y="36" width="5.500" height="4.600" fill="#c5392f"/><rect x="23" y="37" width="5" height="3" fill="#666"/></g><rect x="31" y="26.200" width="15.500" height="9.800" fill="#86a9d8"/><circle cx="42" cy="30.800" r="2.900" fill="#d4213d"/><rect x="48.500" y="17.200" width="28.600" height="22.200" fill="#e8f1fa"/><rect x="53" y="19.400" width="19" height="17.400" fill="#fff"/><path d="M54 34l4-2 4-2 6-6 4-4" stroke="#cf4a4a" stroke-width=".6" fill="none"/><path d="M54 36l4-2 4-2 6-2 4-3" stroke="#4a90c0" stroke-width=".6" fill="none"/><path d="M0 19.500L2.200 25.500V45H0z" fill="#6fbe44"/><path d="M0 24.500L2.200 30V45H0z" fill="#1f8f3e"/><path d="M0 42.300h6.200l.5 2.700H0z" fill="#1f8f3e"/><path d="M6.200 42.300h4.800l.7 2.700h-5z" fill="#7dc04e"/><path d="M12.500 42.300h3.600l1 2.700h-3.900z" fill="#e0f9d2"/><rect x="47.500" y="40.500" width="30" height=".4" fill="#7ab648"/><rect x="54" y="41.600" width="4" height="2.300" fill="#d8232f"/><rect x="59" y="41.600" width="4.500" height="2.300" fill="#d8232f"/><rect x="64.500" y="41.600" width="3.400" height="2.300" fill="#2b3f9e"/><rect x="68.500" y="42.200" width="8" height="1" fill="#8e98c8"/></svg></div>
<div class="a" style="left:17.600px;top:394.7px;width:79.600px;height:44.600px;background:#fcfcfc;overflow:hidden;"><svg class="a" style="left:0;top:0" width="80" height="45" viewBox="0 0 80 45"><defs><linearGradient id="t4a" x1="0" x2="0" y1="0" y2="1"><stop offset="0" stop-color="#e2e4e6"/><stop offset=".35" stop-color="#9aa39a"/><stop offset=".6" stop-color="#3f5a3a"/><stop offset="1" stop-color="#3a2c22"/></linearGradient><linearGradient id="t4b" x1="0" x2="0" y1="0" y2="1"><stop offset="0" stop-color="#cfc6b6"/><stop offset=".55" stop-color="#d9cfbc"/><stop offset="1" stop-color="#a89880"/></linearGradient></defs><circle cx="8.4" cy="8" r="3.400" fill="#8cc0e8"/><circle cx="8.4" cy="16.100" r="3.400" fill="#7a9a6a"/><circle cx="17.5" cy="8" r="3.400" fill="#5a5a5c"/><circle cx="17.5" cy="16.100" r="3.400" fill="#4a3a30"/><circle cx="26.7" cy="8" r="3.400" fill="#9ccbe8"/><circle cx="26.7" cy="16.100" r="3.400" fill="#5a4a38"/><circle cx="35.8" cy="8" r="3.400" fill="#5fa04e"/><circle cx="35.8" cy="16.100" r="3.400" fill="#8aa890"/><path d="M5.0 17.500h6.800a3.400 3.400 0 0 1-6.800 0z" fill="#4a3424" opacity="0.8"/><path d="M14.1 17.500h6.800a3.400 3.400 0 0 1-6.800 0z" fill="#4a3424" opacity="0.8"/><path d="M23.3 17.500h6.800a3.400 3.400 0 0 1-6.800 0z" fill="#4a3424" opacity="0.8"/><path d="M32.4 17.500h6.800a3.400 3.400 0 0 1-6.800 0z" fill="#4a3424" opacity="0"/><rect x="60" y="2.200" width="17" height="2.800" fill="#9cc9a4"/><rect x="45.500" y="6.100" width="31" height="16.400" fill="url(#t4b)"/><path d="M52.500 7v14M50 9.500h6M51 11.500l4-3" stroke="#6a5a3a" stroke-width=".6"/><path d="M57.500 16l.8 4M57.500 16c.8-1 1.600-1 2 0" stroke="#6a9a3a" stroke-width=".6" fill="none"/><rect x="2.200" y="22.500" width="21" height="21" fill="url(#t4a)"/><path d="M12 35c1-4 4-6 7-6-1 3-3 5-7 6zM12 35c-1-2-3-3-5-3 1 2 2.500 3 5 3z" fill="#7cc04a"/><rect x="3.500" y="25" width="2.500" height="4" fill="#4aa0e0"/><rect x="7" y="25.500" width="7" height="2.600" fill="#8a8ad0"/><rect x="25.300" y="22" width="11.200" height="22.500" fill="#3f8fd0"/><g fill="#cfe4f6"><rect x="26.300" y="23.500" width="9.200" height="1.200"/><rect x="26.300" y="26.500" width="4" height="2"/><rect x="31.500" y="26.500" width="4" height="2"/><rect x="26.300" y="30" width="4" height="2"/><rect x="31.500" y="30" width="4" height="2"/><rect x="26.300" y="33.500" width="4" height="2"/><rect x="31.500" y="33.500" width="4" height="2"/><rect x="26.300" y="37" width="4" height="2"/><rect x="31.500" y="37" width="4" height="2"/><rect x="26.300" y="40.500" width="9.200" height="2.500"/></g><rect x="39.400" y="24.400" width="9.800" height="18.200" fill="#b08a62"/><path d="M39.400 24.400h9.800v5c-3 1-6 1-9.800 0z" fill="#c9a27a"/><path d="M41 30l4 5-3 4 5 3" stroke="#7a5a3a" stroke-width=".7" fill="none"/><rect x="54.400" y="23.400" width="21" height="1.800" fill="#6cb04e"/><rect x="54.400" y="25.800" width="21" height="14.500" fill="#a8d4ee"/><path d="M54.400 33c5-6 12-8 21-3v10.300h-21z" fill="#4f9a4a"/><path d="M58 36c5-3 11-3 17.400-1v5.300h-17.400z" fill="#4a86c8"/><path d="M54.400 38c6-1 12 0 21 1.500v.8h-21z" fill="#3a5a8a"/><rect x="53" y="41.300" width="4.200" height="2.300" fill="#d8232f"/><rect x="58.500" y="41.300" width="4.200" height="2.300" fill="#d8232f"/><rect x="64" y="41.300" width="3.400" height="2.300" fill="#2b3f9e"/><rect x="68" y="42" width="8" height=".9" fill="#8e98c8"/><path d="M0 20L2.200 26V45H0z" fill="#6fbe44"/><path d="M0 26L2 31V45H0z" fill="#1f8f3e"/><path d="M0 43h5l.5 2H0z" fill="#1f8f3e"/><path d="M5 43.200h3l.5 1.800h-3z" fill="#a8d87c"/></svg></div>
<div class="a" style="left:17.600px;top:453.2px;width:79.600px;height:44.600px;background:#fcfcfc;overflow:hidden;"><svg class="a" style="left:0;top:0" width="80" height="45" viewBox="0 0 80 45"><defs><linearGradient id="g5" x1="0" x2="0" y1="0" y2="1"><stop offset="0" stop-color="#5e8ede"/><stop offset="1" stop-color="#466fc2"/></linearGradient><linearGradient id="g5b" x1="0" x2="0" y1="0" y2="1"><stop offset="0" stop-color="#a8d4f0"/><stop offset=".45" stop-color="#5aa0d8"/><stop offset="1" stop-color="#2f6aa8"/></linearGradient></defs><g fill="#a4a4a4"><rect x="1.400" y="4.40" width="30.5" height=".8"/><rect x="1.400" y="6.30" width="30.5" height=".8"/><rect x="1.400" y="8.20" width="30.5" height=".8"/><rect x="1.400" y="10.10" width="30.5" height=".8"/><rect x="1.400" y="12.00" width="30.5" height=".8"/><rect x="1.400" y="13.90" width="30.5" height=".8"/><rect x="1.400" y="15.80" width="18" height=".8"/></g><rect x="0" y="21.500" width="34.200" height="16.500" fill="url(#g5)"/><circle cx="5.2" cy="25" r="1.2" fill="#e9f1fc"/><circle cx="29" cy="25" r="1.2" fill="#e9f1fc"/><circle cx="6.6" cy="29.5" r="1.2" fill="#e9f1fc"/><circle cx="27.2" cy="29.5" r="1.2" fill="#e9f1fc"/><circle cx="9.8" cy="33.8" r="1.2" fill="#e9f1fc"/><circle cx="16.4" cy="34.7" r="1.2" fill="#e9f1fc"/><circle cx="23.4" cy="33.8" r="1.2" fill="#e9f1fc"/><path d="M17.300 24.500c1.800 2.600 2.800 4.200 2.800 5.600a2.800 2.800 0 0 1-5.600 0c0-1.400 1-3 2.800-5.600z" fill="#dcebfb"/><rect x="9" y="22.600" width="16" height=".7" fill="#9ab8ea"/><rect x="34.700" y="4.200" width="18.400" height="39.400" fill="#39434f"/><path d="M42 7.500c1.500-1.500 3-1.500 4 0s3 1 4.500-.5c.8 1.500 0 3-1.500 3.500s-3-.5-4.500 0-2.500-1-2.500-3z" fill="#d9b89a"/><g fill="#d8a83a"><rect x="36" y="12" width="10" height=".8"/><rect x="38.5" y="14" width="8" height=".8"/><rect x="38.5" y="17" width="13" height=".8"/><rect x="38.5" y="19" width="11" height=".8"/><rect x="36" y="22.5" width="13" height=".8"/><rect x="38.5" y="24.5" width="7" height=".8"/><rect x="38.5" y="29" width="13" height=".8"/><rect x="38.5" y="33" width="12" height=".8"/><rect x="36" y="35" width="13" height=".8"/><rect x="38.5" y="38" width="10" height=".8"/><rect x="38.5" y="40" width="13" height=".8"/><rect x="38.5" y="42" width="9" height=".8"/></g><g fill="#c9d2dc"><rect x="36" y="6" width="3" height="3"/><rect x="36" y="15.500" width="1.600" height="2.400"/><rect x="36" y="20.500" width="1.600" height="2.400"/><rect x="40" y="26.800" width="7.500" height="1.300"/><rect x="36" y="31.500" width="1.600" height="1.600"/><rect x="36" y="36.500" width="1.600" height="1.600"/></g><rect x="60" y="3" width="17" height="3" fill="#9cc9a4"/><rect x="57.600" y="7" width="17.200" height="15.500" fill="#e4eef6"/><rect x="58.200" y="7.400" width="16" height="3.200" fill="#5a5230"/><g><circle cx="59.500" cy="13" r=".6" fill="#e0703a"/><circle cx="59.500" cy="15.200" r=".6" fill="#3a70c0"/><circle cx="59.500" cy="17.400" r=".6" fill="#3aa06a"/><circle cx="59.500" cy="20" r=".6" fill="#d8b03a"/></g><g fill="#a8b4c0"><rect x="61" y="12.700" width="10" height=".7"/><rect x="61" y="14.900" width="8" height=".7"/><rect x="61" y="17.100" width="12" height=".7"/><rect x="61" y="19.700" width="4" height=".7"/></g><rect x="57.600" y="22.500" width="17.200" height="18.700" fill="url(#g5b)"/><path d="M58.500 33c2-3 6-4.500 10-4s6 2 6 4.500-3 4.500-8 4.500-9-2-8-5z" fill="#6a9a3a"/><path d="M62 32c2-2 5-2.500 7-1.500s2 3-1 4-6 0-6-2.500z" fill="#9aba5a"/><path d="M57.600 37c4 2 10 2.500 17.200 1v3.200h-17.200z" fill="#2a5a98"/><path d="M0 38h8.500l2 7H0z" fill="#2f9a3c"/><path d="M8.500 38h2.500l3 7h-3.500z" fill="#8ed05a"/><path d="M12 39l1.500 0 2.500 6h-1.500z" fill="#d4f0c0"/><path d="M0 20L1 22V38H0z" fill="#6fbe44"/><rect x="53" y="41.800" width="4" height="2.500" fill="#d8232f"/><rect x="59" y="41.800" width="4" height="2.500" fill="#d8232f"/><rect x="64.500" y="41.800" width="3.400" height="2.500" fill="#2b3f9e"/><rect x="68.500" y="42.600" width="7.500" height=".9" fill="#8e98c8"/></svg></div>
<div class="a" style="left:122px;top:492.5px;width:678px;height:12.5px;background:#f1f1f1;"></div>
<div class="a" style="left:122px;top:492.3px;width:678px;height:0.7px;background:#cfcfcf;"></div>
<div class="a" style="left:0;top:495px;width:800px;height:9.800px;overflow:hidden"><div class="a" style="left:0;top:-495px;width:800px;height:576px"><div class="t" style="left:132.80px;top:501.00px;font-size:12px;color:#5a5a5a;letter-spacing:-0.183px;">Not eklemek için tıklayın</div>
</div></div>
<div class="a" style="left:800px;top:206.4px;width:10.5px;height:298.6px;background:#d8d8d8;"></div>
<div class="a" style="left:800px;top:206.5px;width:10.5px;height:10.5px;background:#fdfdfd;border:.5px solid #d0d0d0"></div>
<svg class="a" style="left:803px;top:210px" width="5" height="3" viewBox="0 0 5 3"><path d="M0 3h5l-2.500-3z" fill="#555"/></svg>
<div class="a" style="left:800.5px;top:228px;width:9.5px;height:11px;background:#fff;"></div>
<div class="a" style="left:800px;top:447.7px;width:10.5px;height:35px;background:#fbfbfb;"></div>
<svg class="a" style="left:803.200px;top:452px" width="4" height="2.500" viewBox="0 0 4 2.500"><path d="M0 0h4l-2 2.500z" fill="#6a6a6a"/></svg>
<svg class="a" style="left:803.200px;top:462px" width="4" height="6" viewBox="0 0 4 6"><path d="M0 2.500h4l-2-2.500zM0 5.500h4l-2-2.500z" fill="#6a6a6a"/></svg>
<svg class="a" style="left:803.200px;top:473px" width="4" height="6" viewBox="0 0 4 6"><path d="M0 0h4l-2 2.500zM0 3h4l-2 2.500z" fill="#6a6a6a"/></svg>
<div class="a" style="left:800px;top:482.7px;width:10.5px;height:10px;background:#e6e6e6;"></div>
<div class="a" style="left:800px;top:493px;width:10.5px;height:12px;background:#fbfbfb;"></div>
<svg class="a" style="left:803.200px;top:496.500px" width="4" height="2.500" viewBox="0 0 4 2.500"><path d="M0 2.500h4l-2-2.500z" fill="#6a6a6a"/></svg>
<div class="a" style="left:214.8px;top:210.6px;width:492.9px;height:277.5px;background:#fdfdfd;overflow:hidden"><svg class="a" style="left:0;top:0" width="492.9" height="277.5" viewBox="214.8 210.6 492.9 277.5"><path d="M215 330 C 260 250, 330 215, 420 211 L 215 211 Z" fill="#fafafa"/><path d="M430 211 C 520 230, 600 330, 590 488 L 708 488 L 708 211 Z" fill="#f9f9f9"/><path d="M560 211 C 640 260, 700 360, 690 488 L 708 488 L 708 211 Z" fill="#f8f8f9"/><path d="M215 440 C 300 380, 420 400, 520 488 L 215 488 Z" fill="#f9f9f9"/><polygon points="214.8,210.6 230,210.6 214.8,236" fill="#e6f6d9" /><polygon points="214.8,331.6 214.8,488.1 262,488.1 262,440" fill="#6fbe44" /><polygon points="214.8,360.6 214.8,488.1 255.8,488.1 252.7,472.5 240,430" fill="#1f8f3e" /><polygon points="252.7,472.5 282.7,472.5 287,488.1 255.8,488.1" fill="#7dc04e" /><polygon points="292.2,472.5 314.4,472.5 320.6,488.1 296.4,488.1" fill="#e0f9d2" /><rect x="508" y="460.500" width="187.400" height="1" fill="#7ab648"/></svg></div>
<div class="t" style="left:223.50px;top:235.00px;font-size:9.35px;color:#111;font-family:'Liberation Serif',serif;word-spacing:1.543px;"><span class="sq">Water</span> is a <span class="sq">fundamental</span> <span class="sq">resource</span> <span class="sq">for</span> <span class="sq">all</span> life on Earth. As the</div>
<div class="t" style="left:223.50px;top:246.00px;font-size:9.35px;color:#111;font-family:'Liberation Serif',serif;word-spacing:0.868px;">global <span class="sq">population</span> <span class="sq">continues</span> to <span class="sq">grow</span> <span class="sq">and</span> <span class="sq">the</span> <span class="sq">effects</span> of <span class="sq">climate</span></div>
<div class="t" style="left:223.50px;top:258.00px;font-size:9.35px;color:#111;font-family:'Liberation Serif',serif;word-spacing:1.689px;"><span class="sq">change</span> <span class="sq">become</span> <span class="sq">more</span> <span class="sq">apparent,</span> <span class="sq">the</span> <span class="sq">demand</span> <span class="sq">for</span> <span class="sq">water</span> is <span class="sq">also</span></div>
<div class="t" style="left:223.50px;top:269.00px;font-size:9.35px;color:#111;font-family:'Liberation Serif',serif;"><span class="sq">increasing.</span></div>
<div class="t" style="left:221.40px;top:290.00px;font-size:9.35px;color:#111;font-family:'Liberation Serif',serif;word-spacing:2.319px;">According to research from the</div>
<div class="t" style="left:350.50px;top:290.00px;font-size:9.35px;color:#2f6f88;font-family:'Liberation Serif',serif;font-weight:bold;word-spacing:1.633px;text-decoration:underline;text-decoration-thickness:.7px;text-underline-offset:1px;">World Resources Institute</div>
<div class="t" style="left:458.00px;top:290.00px;font-size:9.35px;color:#111;font-family:'Liberation Serif',serif;">,</div>
<div class="t" style="left:221.40px;top:302.00px;font-size:9.35px;color:#111;font-family:'Liberation Serif',serif;word-spacing:1.048px;">17% of the world's population lives in areas with <b>high water</b></div>
<div class="t" style="left:221.40px;top:313.00px;font-size:9.35px;color:#111;font-family:'Liberation Serif',serif;word-spacing:1.521px;"><b>stress</b>, and it is estimated that this number could increase to</div>
<div class="t" style="left:221.40px;top:324.00px;font-size:9.35px;color:#111;font-family:'Liberation Serif',serif;word-spacing:1.234px;">44% by 2050 without urgent changes by the community as a</div>
<div class="t" style="left:221.40px;top:335.00px;font-size:9.35px;color:#111;font-family:'Liberation Serif',serif;">whole.</div>
<div class="t" style="left:475.00px;top:254.00px;font-size:9.35px;color:#111;font-family:'Liberation Serif',serif;word-spacing:0.582px;">At <span class="sq">the</span> <span class="sq">same</span> <span class="sq">time,</span> <span class="sq">changes</span> in <span class="sq">the</span> <span class="sq">water</span> <span class="sq">cycle</span> <span class="sq">are</span> <span class="sq">causing</span></div>
<div class="t" style="left:475.00px;top:265.00px;font-size:9.35px;color:#111;font-family:'Liberation Serif',serif;word-spacing:-0.296px;"><span class="sq">droughts,</span> <span class="sq">floods</span> <span class="sq">and</span> <span class="sq">other</span> <span class="sq">water-related</span> <span class="sq">problems</span> to occur</div>
<div class="t" style="left:475.00px;top:277.00px;font-size:9.35px;color:#111;font-family:'Liberation Serif',serif;word-spacing:-0.430px;"><span class="sq">more</span> <span class="sq">frequently.</span> <span class="sq">Innovative</span> <span class="sq">water</span> <span class="sq">management</span> <span class="sq">techniques</span></div>
<div class="t" style="left:475.00px;top:288.00px;font-size:9.35px;color:#111;font-family:'Liberation Serif',serif;word-spacing:1.865px;"><span class="sq">are</span> <span class="sq">needed</span> to <span class="sq">overcome</span> <span class="sq">these</span> <span class="sq">challenges</span> <span class="sq">and</span> <span class="sq">meet</span> <span class="sq">the</span></div>
<div class="t" style="left:475.00px;top:299.00px;font-size:9.35px;color:#111;font-family:'Liberation Serif',serif;"><span class="sq">increasing</span> <span class="sq">water</span> <span class="sq">demand.</span></div>
<svg class="a" style="left:587.500px;top:223px" width="24" height="24" viewBox="0 0 24 24"><defs><clipPath id="emc"><circle cx="12" cy="12" r="11.400"/></clipPath></defs><g stroke="#3f9f5c" fill="none" stroke-width=".55"><path d="M3.6 12.0L0.8 12.0"/><path d="M3.8 10.1L1.1 9.5"/><path d="M4.4 8.4L1.9 7.1"/><path d="M5.4 6.8L3.2 5.0"/><path d="M6.8 5.4L5.0 3.2"/><path d="M8.4 4.4L7.1 1.9"/><path d="M10.1 3.8L9.5 1.1"/><path d="M12.0 3.6L12.0 0.8"/><path d="M13.9 3.8L14.5 1.1"/><path d="M15.6 4.4L16.9 1.9"/><path d="M17.2 5.4L19.0 3.2"/><path d="M18.6 6.8L20.8 5.0"/><path d="M19.6 8.4L22.1 7.1"/><path d="M20.2 10.1L22.9 9.5"/><path d="M20.4 12.0L23.2 12.0"/><path d="M4.800 12a7.200 7.200 0 0 1 14.400 0"/><g clip-path="url(#emc)"><path d="M0 12.300h24"/><path d="M0 16.5C6 16.0 12 12.5 24 13.0"/><path d="M0 18.4C6 17.9 12 14.4 24 14.9"/><path d="M0 20.3C6 19.8 12 16.3 24 16.8"/><path d="M0 22.2C6 21.7 12 18.2 24 18.7"/><path d="M0 24.1C6 23.6 12 20.1 24 20.6"/><path d="M0 26.0C6 25.5 12 22.0 24 22.5"/></g></g><g fill="#2f8f4e"><circle cx="12" cy="6.800" r="1.300"/><circle cx="10" cy="8.600" r="1.100"/><circle cx="14" cy="8.600" r="1.100"/><circle cx="11" cy="10.200" r=".8"/><circle cx="13.200" cy="10.200" r=".8"/><rect x="11.700" y="7.500" width=".7" height="5"/></g></svg>
<div class="t" style="left:612.20px;top:227.00px;font-size:8px;color:#2c8249;font-weight:bold;letter-spacing:-0.720px;transform:scaleX(0.7177);transform-origin:0 0;-webkit-text-stroke:.25px #2f8f4e;">2023-1-TR01-KA220-SCH-000160173</div>
<div class="t" style="left:612.20px;top:237.00px;font-size:8.2px;color:#2c8249;font-weight:bold;letter-spacing:-0.738px;transform:scaleX(0.6547);transform-origin:0 0;-webkit-text-stroke:.25px #2f8f4e;">GREEN AGRIPRENEURS OF FUTURE</div>
<div class="a" style="left:227.9px;top:353.3px;width:167.5px;height:119.2px;background:#dcecf8;"></div>
<div class="t" style="left:235.30px;top:361.00px;font-size:5.6px;color:#222;font-weight:bold;letter-spacing:-0.504px;transform:scaleX(0.8216);transform-origin:0 0;-webkit-text-stroke:0.24px #222;">WATER · THE FACTS</div>
<div class="a" style="left:235.3px;top:366.2px;width:39.3px;height:0.6px;background:#222;"></div>
<div class="t" style="left:235.30px;top:379.00px;font-size:10px;color:#d2762b;font-weight:bold;letter-spacing:-0.900px;transform:scaleX(0.8319);transform-origin:0 0;-webkit-text-stroke:0.36px #d2762b;">700 MILLION</div>
<div class="t" style="left:235.30px;top:390.00px;font-size:5.4px;color:#2b2b2b;font-weight:bold;letter-spacing:-0.486px;transform:scaleX(0.7941);transform-origin:0 0;-webkit-text-stroke:0.23px #2b2b2b;">people could</div>
<div class="t" style="left:235.30px;top:396.00px;font-size:5.4px;color:#2b2b2b;font-weight:bold;letter-spacing:-0.486px;transform:scaleX(0.8295);transform-origin:0 0;-webkit-text-stroke:0.23px #2b2b2b;">be displaced</div>
<div class="t" style="left:235.30px;top:402.00px;font-size:5.4px;color:#2b2b2b;font-weight:bold;letter-spacing:-0.486px;transform:scaleX(0.7953);transform-origin:0 0;-webkit-text-stroke:0.23px #2b2b2b;">by extreme</div>
<div class="t" style="left:235.30px;top:407.00px;font-size:5.4px;color:#2b2b2b;font-weight:bold;letter-spacing:-0.486px;transform:scaleX(0.8483);transform-origin:0 0;-webkit-text-stroke:0.23px #2b2b2b;">water scarcity</div>
<div class="t" style="left:235.30px;top:413.00px;font-size:5.4px;color:#2b2b2b;font-weight:bold;letter-spacing:-0.486px;transform:scaleX(0.7515);transform-origin:0 0;-webkit-text-stroke:0.23px #2b2b2b;">by 2030</div>
<div class="t" style="left:235.30px;top:420.00px;font-size:2.6px;color:#777;letter-spacing:-0.234px;transform:scaleX(0.9670);transform-origin:0 0;">(Global Water</div>
<div class="t" style="left:235.30px;top:423.00px;font-size:2.6px;color:#777;letter-spacing:-0.198px;">Institute 2013)</div>
<svg class="a" style="left:260px;top:388.500px" width="27" height="42" viewBox="0 0 27 42"><g fill="#d2762b"><ellipse cx="10" cy="4.200" rx="7.800" ry="3.800"/><circle cx="10.500" cy="10.200" r="2.600"/><path d="M7 13.500c2-1.200 5-1.200 7 0l2.500 9 2.600 3.500-1 1-3.600-3.600.8 9.600 1.200 7.600h-3l-1.400-7-1 7h-3l.2-8-1.600-7.500-1.800 4-1.200-.6z"/><path d="M5.500 8l1.800 4M15 8l-1.500 4" stroke="#d2762b" stroke-width="1.200"/><circle cx="21.800" cy="20.800" r="1.900"/><path d="M19.600 23.400h4.400l2.400 6-1 .6-1.800-3.400.4 6.400.6 7.400h-1.800l-1-6.400-.8 6.400h-1.800l.4-7.800-.2-5.200-1.600 2.600-1-.6z"/></g></svg>
<div class="t" style="left:292.00px;top:381.00px;font-size:5.2px;color:#2b2b2b;font-weight:bold;letter-spacing:-0.468px;transform:scaleX(0.6824);transform-origin:0 0;-webkit-text-stroke:0.23px #2b2b2b;">More than</div>
<div class="t" style="left:292.00px;top:387.00px;font-size:10px;color:#1f7787;font-weight:bold;letter-spacing:-0.900px;transform:scaleX(0.7067);transform-origin:0 0;-webkit-text-stroke:0.36px #1f7787;">FIVE</div>
<div class="t" style="left:292.00px;top:396.00px;font-size:10px;color:#1f7787;font-weight:bold;letter-spacing:-0.900px;transform:scaleX(0.5058);transform-origin:0 0;-webkit-text-stroke:0.36px #1f7787;">BILLION</div>
<div class="t" style="left:292.00px;top:406.00px;font-size:5.4px;color:#2b2b2b;font-weight:bold;letter-spacing:-0.486px;transform:scaleX(0.8187);transform-origin:0 0;-webkit-text-stroke:0.23px #2b2b2b;">people could live</div>
<div class="t" style="left:292.00px;top:412.00px;font-size:5.4px;color:#2b2b2b;font-weight:bold;letter-spacing:-0.486px;transform:scaleX(0.8324);transform-origin:0 0;-webkit-text-stroke:0.23px #2b2b2b;">in water-stressed</div>
<div class="t" style="left:292.00px;top:418.00px;font-size:5.4px;color:#2b2b2b;font-weight:bold;letter-spacing:-0.486px;transform:scaleX(0.8084);transform-origin:0 0;-webkit-text-stroke:0.23px #2b2b2b;">regions by 2050</div>
<div class="t" style="left:292.00px;top:425.00px;font-size:2.6px;color:#777;letter-spacing:-0.216px;">(Bond et al. 2018)</div>
<svg class="a" style="left:307.500px;top:376px" width="23" height="23" viewBox="0 0 23 23"><g fill="#1f7787"><rect x="3.500" y=".8" width="10.500" height="2.200" rx="1"/><rect x="7.600" y="2.600" width="2.400" height="3.600"/><path d="M0 8.500c0-1.500 1.200-2.700 2.700-2.700h9.300c4.800 0 8.800 3.200 9.600 8.200l.4 3h-5l-.3-2.200c-.4-2-2-3.300-4.200-3.300h-3l-2.500 3.800h-4.600l-1.200-3c-.8-.6-1.200-1.400-1.200-2.400z"/><path d="M19.600 19.200c.7 1 1 1.600 1 2.100a1 1 0 0 1-2 0c0-.5.300-1.100 1-2.100z"/></g></svg>
<div class="t" style="left:337.00px;top:378.00px;font-size:15.5px;color:#2b8fd8;font-weight:bold;letter-spacing:-1.395px;transform:scaleX(0.7792);transform-origin:0 0;-webkit-text-stroke:0.51px #2b8fd8;">85%</div>
<svg class="a" style="left:360px;top:378.500px" width="31" height="12" viewBox="0 0 31 12"><g fill="none" stroke="#2f9e4c" stroke-width="1"><path d="M5 8l-2-7M6.500 8l1-6.500M10 8l-1-5M12 8l2-7.500M16 8l-.5-6M18.500 8l2.500-7M22 8l0-5M24.500 8l2.500-6.500"/></g><path d="M0 8.600c2.600-2 5-2 7.600 0s5 2 7.600 0 5-2 7.600 0 5 2 7.600 0" fill="none" stroke="#2b8fd8" stroke-width="1.300"/><path d="M2 11c2.600-1.600 5-1.600 7.600 0s5 1.600 7.600 0 5-1.600 7.600 0" fill="none" stroke="#2b8fd8" stroke-width="1"/></svg>
<div class="t" style="left:337.00px;top:394.00px;font-size:5.4px;color:#2b2b2b;font-weight:bold;letter-spacing:-0.486px;transform:scaleX(0.8605);transform-origin:0 0;-webkit-text-stroke:0.23px #2b2b2b;">of wetlands are estimated to</div>
<div class="t" style="left:337.00px;top:400.00px;font-size:5.4px;color:#2b2b2b;font-weight:bold;letter-spacing:-0.486px;transform:scaleX(0.8293);transform-origin:0 0;-webkit-text-stroke:0.23px #2b2b2b;">have been lost since the</div>
<div class="t" style="left:337.00px;top:406.00px;font-size:5.4px;color:#2b2b2b;font-weight:bold;letter-spacing:-0.486px;transform:scaleX(0.8468);transform-origin:0 0;-webkit-text-stroke:0.23px #2b2b2b;">pre-industrial era and the rate</div>
<div class="t" style="left:337.00px;top:412.00px;font-size:5.4px;color:#2b2b2b;font-weight:bold;letter-spacing:-0.486px;transform:scaleX(0.8486);transform-origin:0 0;-webkit-text-stroke:0.23px #2b2b2b;">of loss is still accelerating</div>
<div class="t" style="left:337.00px;top:419.00px;font-size:2.6px;color:#777;letter-spacing:-0.234px;transform:scaleX(0.9006);transform-origin:0 0;">(IPBES 2019)</div>
<svg class="a" style="left:231.500px;top:432px" width="9" height="33" viewBox="0 0 9 33"><g fill="#a8923a"><rect x="4.200" y="2" width=".8" height="31"/><ellipse cx="6.6" cy="4.0" rx="1.100" ry="2.200" transform="rotate(-25 6.6 4.0)"/><ellipse cx="2.6" cy="6.1" rx="1.100" ry="2.200" transform="rotate(25 2.6 6.1)"/><ellipse cx="6.6" cy="8.2" rx="1.100" ry="2.200" transform="rotate(-25 6.6 8.2)"/><ellipse cx="2.6" cy="10.3" rx="1.100" ry="2.200" transform="rotate(25 2.6 10.3)"/><ellipse cx="6.6" cy="12.4" rx="1.100" ry="2.200" transform="rotate(-25 6.6 12.4)"/><ellipse cx="2.6" cy="14.5" rx="1.100" ry="2.200" transform="rotate(25 2.6 14.5)"/><ellipse cx="6.6" cy="16.6" rx="1.100" ry="2.200" transform="rotate(-25 6.6 16.6)"/><ellipse cx="2.6" cy="18.700000000000003" rx="1.100" ry="2.200" transform="rotate(25 2.6 18.700000000000003)"/><ellipse cx="6.6" cy="20.8" rx="1.100" ry="2.200" transform="rotate(-25 6.6 20.8)"/><ellipse cx="2.6" cy="22.900000000000002" rx="1.100" ry="2.200" transform="rotate(25 2.6 22.900000000000002)"/><ellipse cx="6.6" cy="25.0" rx="1.100" ry="2.200" transform="rotate(-25 6.6 25.0)"/><ellipse cx="4.600" cy="2.200" rx="1" ry="2.200"/></g></svg>
<div class="t" style="left:241.80px;top:436.00px;font-size:15.5px;color:#8e7c24;font-weight:bold;letter-spacing:-1.395px;transform:scaleX(0.7828);transform-origin:0 0;-webkit-text-stroke:0.51px #8e7c24;">72%</div>
<div class="t" style="left:264.70px;top:439.00px;font-size:5.4px;color:#2b2b2b;font-weight:bold;letter-spacing:-0.486px;transform:scaleX(0.8698);transform-origin:0 0;-webkit-text-stroke:0.23px #2b2b2b;">of all water withdrawals</div>
<div class="t" style="left:264.70px;top:445.00px;font-size:5.4px;color:#2b2b2b;font-weight:bold;letter-spacing:-0.486px;transform:scaleX(0.8644);transform-origin:0 0;-webkit-text-stroke:0.23px #2b2b2b;">are used by agriculture,</div>
<div class="t" style="left:241.80px;top:450.00px;font-size:5.4px;color:#2b2b2b;font-weight:bold;letter-spacing:-0.486px;transform:scaleX(0.8177);transform-origin:0 0;-webkit-text-stroke:0.23px #2b2b2b;">16% by municipalities for households</div>
<div class="t" style="left:241.80px;top:456.00px;font-size:5.4px;color:#2b2b2b;font-weight:bold;letter-spacing:-0.486px;transform:scaleX(0.8200);transform-origin:0 0;-webkit-text-stroke:0.23px #2b2b2b;">and services, and 12% by industries</div>
<div class="t" style="left:241.80px;top:464.00px;font-size:2.6px;color:#777;letter-spacing:-0.234px;transform:scaleX(0.9952);transform-origin:0 0;">(UN Water 2021)</div>
<svg class="a" style="left:312.500px;top:431px" width="38" height="32" viewBox="0 0 38 32"><g fill="#c0392f"><path d="M8 14v-9h2.500v-3h2v3h1.500v-2.500h3v-2.200h1v2.200h2v5h2v-4h3v6h2v-3.500h2.500v8z"/></g><g fill="none" stroke="#c0392f" stroke-width="1.200"><path d="M1 16h36M3 19.500l8-3 6 3 7-3 9 3.500M0 22l7 1.500 5-3.500M12 20l3 5 7-2 2-6M22 23l6 3 5-5M15 25l-3 5M22 23l1 7M28 26l3 4M7 23.500l-2 5"/></g></svg>
<div class="t" style="left:350.60px;top:435.00px;font-size:10px;color:#c0392f;font-weight:bold;letter-spacing:-0.900px;transform:scaleX(0.7011);transform-origin:0 0;-webkit-text-stroke:0.36px #c0392f;">HALF</div>
<div class="t" style="left:368.60px;top:439.00px;font-size:5.4px;color:#2b2b2b;font-weight:bold;letter-spacing:-0.486px;transform:scaleX(0.7173);transform-origin:0 0;-webkit-text-stroke:0.23px #2b2b2b;">of the</div>
<div class="t" style="left:350.60px;top:444.00px;font-size:5.4px;color:#2b2b2b;font-weight:bold;letter-spacing:-0.486px;transform:scaleX(0.7768);transform-origin:0 0;-webkit-text-stroke:0.23px #2b2b2b;">world's largest cities</div>
<div class="t" style="left:350.60px;top:450.00px;font-size:5.4px;color:#2b2b2b;font-weight:bold;letter-spacing:-0.486px;transform:scaleX(0.8521);transform-origin:0 0;-webkit-text-stroke:0.23px #2b2b2b;">already experience</div>
<div class="t" style="left:350.60px;top:456.00px;font-size:5.4px;color:#2b2b2b;font-weight:bold;letter-spacing:-0.486px;transform:scaleX(0.8551);transform-origin:0 0;-webkit-text-stroke:0.23px #2b2b2b;">water scarcity</div>
<div class="t" style="left:350.60px;top:464.00px;font-size:2.6px;color:#777;letter-spacing:0.025px;">(World Economic Forum 2017)</div>
<div class="a" style="left:405.900px;top:372.800px;width:95.800px;height:60.300px;overflow:hidden;background:linear-gradient(180deg,#4b80c8 0,#6496d6 45%,#86afe0 100%)"><div class="a" style="left:-6px;top:-4px;width:40px;height:16px;border-radius:50%;background:radial-gradient(closest-side,rgba(232,241,252,0.5),rgba(232,241,252,0))"></div><div class="a" style="left:28px;top:2px;width:40px;height:14px;border-radius:50%;background:radial-gradient(closest-side,rgba(232,241,252,0.55),rgba(232,241,252,0))"></div><div class="a" style="left:60px;top:-3px;width:40px;height:18px;border-radius:50%;background:radial-gradient(closest-side,rgba(232,241,252,0.45),rgba(232,241,252,0))"></div><div class="a" style="left:2px;top:26px;width:22px;height:16px;border-radius:50%;background:radial-gradient(closest-side,rgba(232,241,252,0.45),rgba(232,241,252,0))"></div><div class="a" style="left:20px;top:40px;width:40px;height:22px;border-radius:50%;background:radial-gradient(closest-side,rgba(232,241,252,0.6),rgba(232,241,252,0))"></div><div class="a" style="left:62px;top:34px;width:36px;height:24px;border-radius:50%;background:radial-gradient(closest-side,rgba(232,241,252,0.55),rgba(232,241,252,0))"></div><div class="a" style="left:-8px;top:48px;width:30px;height:14px;border-radius:50%;background:radial-gradient(closest-side,rgba(232,241,252,0.5),rgba(232,241,252,0))"></div><div class="a" style="left:44px;top:14px;width:16px;height:10px;border-radius:50%;background:radial-gradient(closest-side,rgba(232,241,252,0.3),rgba(232,241,252,0))"></div><div class="a" style="left:67.100px;top:45.800px;width:3.600px;height:15px;background:linear-gradient(180deg,#f4f4f4 0,#f4f4f4 72%,#333 72%)"></div><div class="a" style="left:53.600px;top:13px;width:34.400px;height:33px;background:#3a3f4a;clip-path:polygon(30% 0,70% 0,100% 30%,100% 70%,70% 100%,30% 100%,0 70%,0 30%)"></div><div class="a" style="left:51.600px;top:11px;width:34.400px;height:34.400px;border-radius:50%;background:#d3203f;box-shadow:inset 0 0 0 .8px #e4566c"></div></div>
<div class="t" style="left:416.00px;top:388.00px;font-size:5px;color:#1c2533;font-weight:bold;letter-spacing:0.046px;">'2/3rd global</div>
<div class="t" style="left:416.00px;top:394.00px;font-size:5px;color:#1c2533;font-weight:bold;letter-spacing:-0.006px;">population</div>
<div class="t" style="left:416.00px;top:399.00px;font-size:5px;color:#1c2533;font-weight:bold;letter-spacing:0.013px;">could be under</div>
<div class="t" style="left:416.00px;top:404.00px;font-size:5px;color:#1c2533;font-weight:bold;letter-spacing:0.032px;">stress due to</div>
<div class="t" style="left:416.00px;top:409.00px;font-size:5px;color:#1c2533;font-weight:bold;letter-spacing:0.011px;">water scarcity</div>
<div class="t" style="left:416.00px;top:415.00px;font-size:5px;color:#1c2533;font-weight:bold;letter-spacing:-0.148px;">by 2025'</div>
<div class="t" style="left:464.80px;top:393.00px;font-size:8.8px;color:#fff;font-weight:bold;letter-spacing:-0.792px;transform:scaleX(0.9043);transform-origin:0 0;-webkit-text-stroke:.3px #fff;">Water</div>
<div class="t" style="left:465.60px;top:401.00px;font-size:8.8px;color:#fff;font-weight:bold;letter-spacing:-0.792px;transform:scaleX(0.8391);transform-origin:0 0;-webkit-text-stroke:.3px #fff;">Crisis</div>
<div class="a" style="left:514.5px;top:316.3px;width:176.8px;height:137.4px;background:#e8f1fa;"></div>
<div class="a" style="left:542.9px;top:329.6px;width:117.80000000000007px;height:108.29999999999995px;background:#fff;"></div>
<svg class="a" style="left:514px;top:316px" width="178" height="138" viewBox="514 316 178 138"><path d="M542.9 329.60H660.7" stroke="#cfcfcf" stroke-width=".6"/><path d="M542.9 341.63H660.7" stroke="#cfcfcf" stroke-width=".6"/><path d="M542.9 353.67H660.7" stroke="#cfcfcf" stroke-width=".6"/><path d="M542.9 365.70H660.7" stroke="#cfcfcf" stroke-width=".6"/><path d="M542.9 377.73H660.7" stroke="#cfcfcf" stroke-width=".6"/><path d="M542.9 389.77H660.7" stroke="#cfcfcf" stroke-width=".6"/><path d="M542.9 401.80H660.7" stroke="#cfcfcf" stroke-width=".6"/><path d="M542.9 413.83H660.7" stroke="#cfcfcf" stroke-width=".6"/><path d="M542.9 425.87H660.7" stroke="#cfcfcf" stroke-width=".6"/><path d="M542.9 437.90H660.7" stroke="#cfcfcf" stroke-width=".6"/><path d="M542.9 329.6V437.9M660.7 329.6V437.9" stroke="#b8b8b8" stroke-width=".6"/><path d="M548.6 418.0 L559.2 410.2 L569.9 407.3 L580.5 401.6 L591.2 393.4 L601.8 384.4 L612.4 374.1 L623.1 369.3 L633.7 364.3 L644.4 354.9 L655.0 341.5" fill="none" stroke="#d25a5a" stroke-width=".8"/><path d="M548.6 430.9 L559.2 425.9 L569.9 421.3 L580.5 414.2 L591.2 407.0 L601.8 399.4 L612.4 394.6 L623.1 392.2 L633.7 390.1 L644.4 384.6 L655.0 374.9" fill="none" stroke="#4b92be" stroke-width=".8"/><rect x="545.400" y="331.500" width="79" height="19" fill="#fff" stroke="#bdbdbd" stroke-width=".5"/><path d="M549 336.800h17.600" stroke="#c94a4a" stroke-width="1"/><path d="M549 345.400h17.600" stroke="#3f88b8" stroke-width="1"/></svg>
<div class="t" style="left:525.90px;top:328.00px;font-size:5.2px;color:#3c3c3c;letter-spacing:0.011px;">9000</div>
<div class="t" style="left:666.00px;top:328.00px;font-size:5.2px;color:#3c3c3c;letter-spacing:0.468px;transform:scaleX(1.0152);transform-origin:0 0;">90.0</div>
<div class="t" style="left:525.90px;top:340.00px;font-size:5.2px;color:#3c3c3c;letter-spacing:0.011px;">8000</div>
<div class="t" style="left:666.00px;top:340.00px;font-size:5.2px;color:#3c3c3c;letter-spacing:0.468px;transform:scaleX(1.0152);transform-origin:0 0;">80.0</div>
<div class="t" style="left:525.90px;top:352.00px;font-size:5.2px;color:#3c3c3c;letter-spacing:0.011px;">7000</div>
<div class="t" style="left:666.00px;top:352.00px;font-size:5.2px;color:#3c3c3c;letter-spacing:0.468px;transform:scaleX(1.0152);transform-origin:0 0;">70.0</div>
<div class="t" style="left:525.90px;top:364.00px;font-size:5.2px;color:#3c3c3c;letter-spacing:0.011px;">6000</div>
<div class="t" style="left:666.00px;top:364.00px;font-size:5.2px;color:#3c3c3c;letter-spacing:0.468px;transform:scaleX(1.0152);transform-origin:0 0;">60.0</div>
<div class="t" style="left:525.90px;top:376.00px;font-size:5.2px;color:#3c3c3c;letter-spacing:0.011px;">5000</div>
<div class="t" style="left:666.00px;top:376.00px;font-size:5.2px;color:#3c3c3c;letter-spacing:0.468px;transform:scaleX(1.0152);transform-origin:0 0;">50.0</div>
<div class="t" style="left:525.90px;top:388.00px;font-size:5.2px;color:#3c3c3c;letter-spacing:0.011px;">4000</div>
<div class="t" style="left:666.00px;top:388.00px;font-size:5.2px;color:#3c3c3c;letter-spacing:0.468px;transform:scaleX(1.0152);transform-origin:0 0;">40.0</div>
<div class="t" style="left:525.90px;top:400.00px;font-size:5.2px;color:#3c3c3c;letter-spacing:0.011px;">3000</div>
<div class="t" style="left:666.00px;top:400.00px;font-size:5.2px;color:#3c3c3c;letter-spacing:0.468px;transform:scaleX(1.0152);transform-origin:0 0;">30.0</div>
<div class="t" style="left:525.90px;top:412.00px;font-size:5.2px;color:#3c3c3c;letter-spacing:0.011px;">2000</div>
<div class="t" style="left:666.00px;top:412.00px;font-size:5.2px;color:#3c3c3c;letter-spacing:0.468px;transform:scaleX(1.0152);transform-origin:0 0;">20.0</div>
<div class="t" style="left:525.90px;top:424.00px;font-size:5.2px;color:#3c3c3c;letter-spacing:0.011px;">1000</div>
<div class="t" style="left:666.00px;top:424.00px;font-size:5.2px;color:#3c3c3c;letter-spacing:0.468px;transform:scaleX(1.0152);transform-origin:0 0;">10.0</div>
<div class="t" style="left:534.60px;top:436.00px;font-size:5.2px;color:#3c3c3c;letter-spacing:0.008px;">0</div>
<div class="t" style="left:669.00px;top:436.00px;font-size:5.2px;color:#3c3c3c;letter-spacing:0.468px;transform:scaleX(1.0655);transform-origin:0 0;">0.0</div>
<div class="t" style="left:524.60px;top:319.00px;font-size:5px;color:#3c3c3c;letter-spacing:0.435px;">(km³)</div>
<div class="t" style="left:640.80px;top:319.00px;font-size:5px;color:#3c3c3c;letter-spacing:0.274px;">(100 M people)</div>
<div class="t" style="left:570.40px;top:335.00px;font-size:5.2px;color:#222;letter-spacing:0.311px;">World population</div>
<div class="t" style="left:570.40px;top:343.00px;font-size:5.2px;color:#222;letter-spacing:0.271px;">World water usage</div>
<div class="t" style="left:534.4px;top:440px;width:16px;text-align:right;font-size:5.600px;color:#3c3c3c;transform:rotate(-45deg);transform-origin:100% 0;letter-spacing:-.15px">1900</div>
<div class="t" style="left:545.0px;top:440px;width:16px;text-align:right;font-size:5.600px;color:#3c3c3c;transform:rotate(-45deg);transform-origin:100% 0;letter-spacing:-.15px">1940</div>
<div class="t" style="left:555.7px;top:440px;width:16px;text-align:right;font-size:5.600px;color:#3c3c3c;transform:rotate(-45deg);transform-origin:100% 0;letter-spacing:-.15px">1950</div>
<div class="t" style="left:566.3px;top:440px;width:16px;text-align:right;font-size:5.600px;color:#3c3c3c;transform:rotate(-45deg);transform-origin:100% 0;letter-spacing:-.15px">1960</div>
<div class="t" style="left:577.0px;top:440px;width:16px;text-align:right;font-size:5.600px;color:#3c3c3c;transform:rotate(-45deg);transform-origin:100% 0;letter-spacing:-.15px">1970</div>
<div class="t" style="left:587.6px;top:440px;width:16px;text-align:right;font-size:5.600px;color:#3c3c3c;transform:rotate(-45deg);transform-origin:100% 0;letter-spacing:-.15px">1980</div>
<div class="t" style="left:598.2px;top:440px;width:16px;text-align:right;font-size:5.600px;color:#3c3c3c;transform:rotate(-45deg);transform-origin:100% 0;letter-spacing:-.15px">1990</div>
<div class="t" style="left:608.9px;top:440px;width:16px;text-align:right;font-size:5.600px;color:#3c3c3c;transform:rotate(-45deg);transform-origin:100% 0;letter-spacing:-.15px">1995</div>
<div class="t" style="left:619.5px;top:440px;width:16px;text-align:right;font-size:5.600px;color:#3c3c3c;transform:rotate(-45deg);transform-origin:100% 0;letter-spacing:-.15px">2000</div>
<div class="t" style="left:630.2px;top:440px;width:16px;text-align:right;font-size:5.600px;color:#3c3c3c;transform:rotate(-45deg);transform-origin:100% 0;letter-spacing:-.15px">2010</div>
<div class="t" style="left:640.8px;top:440px;width:16px;text-align:right;font-size:5.600px;color:#3c3c3c;transform:rotate(-45deg);transform-origin:100% 0;letter-spacing:-.15px">2025</div>
<div class="t" style="left:543.50px;top:407.00px;font-size:5.4px;color:#c23b3b;font-weight:bold;letter-spacing:0.197px;">16.5</div>
<div class="t" style="left:564.00px;top:399.00px;font-size:5.4px;color:#c23b3b;font-weight:bold;letter-spacing:0.163px;">25.4</div>
<div class="t" style="left:626.00px;top:357.00px;font-size:5.4px;color:#c23b3b;font-weight:bold;letter-spacing:0.163px;">61.2</div>
<div class="t" style="left:647.00px;top:336.00px;font-size:5.4px;color:#c23b3b;font-weight:bold;letter-spacing:0.163px;">80.1</div>
<div class="t" style="left:545.40px;top:421.00px;font-size:5.4px;color:#3d86b4;letter-spacing:0.486px;transform:scaleX(1.0118);transform-origin:0 0;">579</div>
<div class="t" style="left:572.30px;top:420.00px;font-size:5.4px;color:#3d86b4;letter-spacing:0.229px;">1382</div>
<div class="t" style="left:618.00px;top:385.00px;font-size:5.4px;color:#3d86b4;letter-spacing:0.429px;">3973</div>
<div class="t" style="left:646.50px;top:368.00px;font-size:5.4px;color:#3d86b4;letter-spacing:0.396px;">5235</div>
<div class="a" style="left:546px;top:467.9px;width:17.5px;height:14.1px;background:#e0222f;border-radius:1px 0 0 1px"></div>
<svg class="a" style="left:546px;top:467.900px" width="18" height="14" viewBox="0 0 18 14"><circle cx="6.600" cy="7" r="4" fill="#fff"/><circle cx="7.800" cy="7" r="3.200" fill="#e0222f"/><path d="M11.200 5.400l.6 1.200 1.300.1-1 .9.300 1.300-1.200-.7-1.100.7.300-1.300-1-.9 1.300-.1z" fill="#fff"/></svg>
<div class="a" style="left:563.2px;top:467.9px;width:9.7px;height:14.1px;background:#2b3f9e;border-radius:0 1px 1px 0"></div>
<svg class="a" style="left:563.200px;top:467.900px" width="10" height="14" viewBox="0 0 10 14"><circle cx="4" cy="7" r="3.400" fill="none" stroke="#f5d21c" stroke-width=".9" stroke-dasharray=".9 .9"/></svg>
<div class="a" style="left:578px;top:467.9px;width:9px;height:14.1px;background:#fff;"></div>
<svg class="a" style="left:578px;top:467.900px" width="9" height="14" viewBox="0 0 9 14"><circle cx="4.500" cy="2.600" r="1.300" fill="#d8232f"/><path d="M1 1.500c1 3 2 4.500 3.500 5.500 1.500-1 2.500-2.500 3.500-5.500-.6 4-1.200 6-2.400 7.500l-.4 4.500h-1.400l-.4-4.500c-1.200-1.500-1.800-3.500-2.400-7.500z" fill="#2a6ab0"/></svg>
<div class="a" style="left:586.6px;top:467.9px;width:19.4px;height:14.1px;background:#dc2a3c;border-radius:1px"></div>
<div class="a" style="left:589px;top:473px;width:14px;height:1.2px;background:#f4c8cc;"></div>
<div class="a" style="left:589px;top:476px;width:14px;height:0.6px;background:#ee9aa2;"></div>
<div class="a" style="left:613.3px;top:467.9px;width:19.7px;height:14.1px;background:#2b3f9e;"></div>
<svg class="a" style="left:613.300px;top:467.900px" width="20" height="14" viewBox="0 0 20 14"><circle cx="9.800" cy="7" r="4" fill="none" stroke="#f5d21c" stroke-width="1" stroke-dasharray="1 1.100"/></svg>
<div class="a" style="left:633px;top:467.9px;width:62.4px;height:14.1px;background:#fff;"></div>
<div class="t" style="left:635.40px;top:471.00px;font-size:4.8px;color:#2b3f9e;font-weight:bold;letter-spacing:-0.093px;">Avrupa Birliği tarafından</div>
<div class="t" style="left:635.40px;top:477.00px;font-size:4.8px;color:#2b3f9e;font-weight:bold;letter-spacing:-0.116px;">ortak finanse edilmektedir</div>
<!-- sec_panel -->
<div class="a" style="left:811px;top:30px;width:213px;height:514px;background:#fff;"></div>
<div class="a" style="left:811px;top:30px;width:213px;height:28px;background:#f1f4f7;"></div>
<div class="a" style="left:811px;top:30px;width:2.5px;height:515px;background:linear-gradient(90deg,#d9dde2,#fff);"></div>
<div class="t" style="left:865.00px;top:41.00px;font-size:8.3px;color:#1a1a1a;font-weight:bold;letter-spacing:0.166px;">Katılımcılar (130)</div>
<svg class="a" style="left:989px;top:40px" width="10" height="10" viewBox="0 0 10 10"><path d="M4.200 1.200h-2a1.400 1.400 0 0 0-1.400 1.400v5.200a1.400 1.400 0 0 0 1.400 1.400h5.200a1.400 1.400 0 0 0 1.400-1.400v-2M5.800.8h3.400v3.400M9 1l-4 4" fill="none" stroke="#555" stroke-width=".9"/></svg>
<svg class="a" style="left:1008.500px;top:41.500px" width="7" height="7" viewBox="0 0 7 7"><path d="M.4.400l6.200 6.200M6.600.4L.4 6.600" stroke="#666" stroke-width=".8"/></svg>
<div class="a" style="left:823.5px;top:66.25px;width:189px;height:20.75px;background:#fff;border:.9px solid #c3c7d3;border-radius:4.500px"></div>
<svg class="a" style="left:831px;top:73px" width="8" height="8" viewBox="0 0 8 8"><circle cx="3.300" cy="3.300" r="2.600" fill="none" stroke="#666" stroke-width=".8"/><path d="M5.200 5.200l2.400 2.400" stroke="#666" stroke-width=".9"/></svg>
<div class="t" style="left:842.50px;top:72.00px;font-size:8.6px;color:#8a8a8a;letter-spacing:-0.193px;">Katılımcı bul</div>
<div class="a" style="left:1017.2px;top:89.5px;width:4.6px;height:54px;background:#8c8c8e;border-radius:2.300px"></div>
<div class="a" style="left:811px;top:88px;width:205px;height:420.500px;overflow:hidden"><div class="a" style="left:-811px;top:-88px;width:1024px;height:576px">
<svg class="a" style="left:825.200px;top:93.3px" width="18" height="18" viewBox="0 0 18 18"><circle cx="9" cy="9" r="8.800" fill="#fff"/><path d="M3 1.500v7" stroke="#e11" stroke-width=".8"/><circle cx="9" cy="9" r="8.200" fill="none" stroke="#6ab023" stroke-width="1"/><circle cx="9" cy="9.600" r="6.500" fill="none" stroke="#e02020" stroke-width="1.100"/><circle cx="8.600" cy="10" r="4.800" fill="none" stroke="#2a2a2a" stroke-width="1.300"/><path d="M8.400 10l3.200-3" stroke="#2a2a2a" stroke-width="1.100"/></svg>
<div class="t" style="left:851.20px;top:100.00px;font-size:8.2px;color:#2a2a2a;letter-spacing:-0.160px;">Bebka Bebka (Ben)</div>
<svg class="a" style="left:981px;top:96.89999999999999px" width="11" height="12" viewBox="0 0 11 12"><g fill="none" stroke="#ec6165" stroke-width=".8"><rect x="4" y="1" width="2.800" height="5.400" rx="1.400"/><path d="M2.600 5.200c0 1.900 1.200 3 2.800 3s2.800-1.100 2.800-3M5.400 8.200v2.100M4 10.400h2.800"/><path d="M10.300.2L.2 11" stroke-width=".9"/></g></svg>
<svg class="a" style="left:996.3000000000001px;top:97.1px" width="12" height="11" viewBox="0 0 12 11"><g fill="none" stroke="#ec6165" stroke-width=".8"><rect x=".5" y="2.600" width="8.200" height="6.200" rx="1.300"/><path d="M8.800 4.600l2.400-1.300v4.800l-2.400-1.300"/><path d="M11 .2L.6 10.800" stroke-width=".9"/></g></svg>
<div class="a" style="left:825.200px;top:120.57px;width:18.100px;height:18px;border-radius:4.200px;background:#c7175e"></div>
<div class="t" style="left:829.40px;top:123.00px;font-size:13.2px;color:#fff;letter-spacing:-0.796px;">M</div>
<div class="t" style="left:851.20px;top:128.00px;font-size:8.2px;color:#2a2a2a;letter-spacing:0.095px;">Mehmet Ay... (Oturum Sahibi)</div>
<svg class="a" style="left:981px;top:124.16999999999999px" width="11" height="12" viewBox="0 0 11 12"><g fill="none" stroke="#ec6165" stroke-width=".8"><rect x="4" y="1" width="2.800" height="5.400" rx="1.400"/><path d="M2.600 5.200c0 1.900 1.200 3 2.800 3s2.800-1.100 2.800-3M5.400 8.200v2.100M4 10.400h2.800"/><path d="M10.300.2L.2 11" stroke-width=".9"/></g></svg>
<svg class="a" style="left:996.3000000000001px;top:124.36999999999999px" width="12" height="11" viewBox="0 0 12 11"><g fill="none" stroke="#ec6165" stroke-width=".8"><rect x=".5" y="2.600" width="8.200" height="6.200" rx="1.300"/><path d="M8.800 4.600l2.400-1.300v4.800l-2.400-1.300"/><path d="M11 .2L.6 10.800" stroke-width=".9"/></g></svg>
<svg class="a" style="left:964.75px;top:125.57px" width="11" height="8" viewBox="0 0 11 8"><path d="M2.600 7.300C1.300 7.300.5 6.400.5 5.400.5 4.300 1.300 3.600 2.300 3.500 2.500 1.900 3.800.7 5.400.7 6.800.7 7.900 1.500 8.400 2.800 9.700 2.900 10.500 3.800 10.500 5 10.500 6.300 9.600 7.300 8.300 7.300Z" fill="#fff" stroke="#8d8d96" stroke-width=".7"/><circle cx="5.400" cy="4.600" r="0.9" fill="#e0393e"/></svg>
<div class="a" style="left:825.200px;top:147.84px;width:18.100px;height:18px;border-radius:4.200px;background:#2f7fcf"></div>
<div class="t" style="left:828.47px;top:154.00px;font-size:8px;color:#fff;font-weight:bold;">BB</div>
<div class="t" style="left:851.20px;top:155.00px;font-size:8.2px;color:#2a2a2a;letter-spacing:0.125px;">b... (Ortak oturum sahibi)</div>
<div class="a" style="left:948.5px;top:153.04px;width:11px;height:8px;background:#17a34a;border-radius:1.500px"></div>
<svg class="a" style="left:951.500px;top:154.54px" width="5" height="5" viewBox="0 0 5 5"><path d="M2.500.2l2.200 2.400h-1.500v2.200h-1.400v-2.200h-1.500z" fill="#fff"/></svg>
<svg class="a" style="left:964.75px;top:152.84px" width="11" height="8" viewBox="0 0 11 8"><path d="M2.600 7.300C1.300 7.300.5 6.400.5 5.400.5 4.300 1.300 3.600 2.300 3.500 2.500 1.900 3.800.7 5.400.7 6.800.7 7.900 1.500 8.400 2.800 9.700 2.900 10.500 3.800 10.500 5 10.500 6.300 9.600 7.300 8.300 7.300Z" fill="#fff" stroke="#8d8d96" stroke-width=".7"/><circle cx="5.400" cy="4.600" r="0.9" fill="#e0393e"/></svg>
<svg class="a" style="left:982px;top:151.64000000000001px" width="8" height="11" viewBox="0 0 8 11"><rect x="2.200" y=".3" width="3.600" height="6.200" rx="1.800" fill="#666"/><path d="M.8 4.800c0 2 1.400 3.200 3.200 3.200s3.200-1.200 3.200-3.200M4 8v1.900M2.400 10h3.200" fill="none" stroke="#666" stroke-width=".8"/></svg>
<svg class="a" style="left:996.3000000000001px;top:151.64000000000001px" width="12" height="11" viewBox="0 0 12 11"><g fill="none" stroke="#ec6165" stroke-width=".8"><rect x=".5" y="2.600" width="8.200" height="6.200" rx="1.300"/><path d="M8.800 4.600l2.400-1.300v4.800l-2.400-1.300"/><path d="M11 .2L.6 10.800" stroke-width=".9"/></g></svg>
<div class="a" style="left:825.200px;top:175.11px;width:18px;height:18px;border-radius:4px;overflow:hidden;background:#8a6a4a"><div class="a" style="left:0;top:0;width:7px;height:9px;background:#d9b040"></div><div class="a" style="left:11px;top:0;width:7px;height:10px;background:#5a78b8"></div><div class="a" style="left:5.500px;top:3px;width:7px;height:8px;border-radius:50%;background:#e8c0a8"></div><div class="a" style="left:5px;top:1.500px;width:8px;height:4px;border-radius:50% 50% 0 0;background:#4a2a2a"></div><div class="a" style="left:2.500px;top:10px;width:13px;height:9px;border-radius:40% 40% 0 0;background:#c83a5a"></div></div>
<div class="t" style="left:852.70px;top:182.00px;font-size:8.2px;color:#2a2a2a;letter-spacing:0.110px;">oturum sahibi, çevirmen)</div>
<div class="a" style="left:949.5px;top:178.71px;width:10.6px;height:10.6px;background:#e9e9ef;border-radius:50%"></div>
<div class="t" style="left:953.00px;top:182.00px;font-size:6.4px;color:#333;font-weight:bold;">T</div>
<svg class="a" style="left:964.75px;top:180.11px" width="11" height="8" viewBox="0 0 11 8"><path d="M2.600 7.300C1.300 7.300.5 6.400.5 5.400.5 4.300 1.300 3.600 2.300 3.500 2.500 1.900 3.800.7 5.400.7 6.800.7 7.900 1.500 8.400 2.800 9.700 2.900 10.500 3.800 10.500 5 10.500 6.300 9.600 7.300 8.300 7.300Z" fill="#fff" stroke="#8d8d96" stroke-width=".7"/><circle cx="5.400" cy="4.600" r="1.5" fill="#e0393e"/></svg>
<svg class="a" style="left:982px;top:178.91000000000003px" width="8" height="11" viewBox="0 0 8 11"><rect x="2.400" y=".5" width="3.200" height="6" rx="1.600" fill="none" stroke="#777" stroke-width=".8"/><path d="M.8 4.800c0 2 1.400 3.200 3.200 3.200s3.200-1.200 3.200-3.200M4 8v1.900M2.400 10h3.200" fill="none" stroke="#777" stroke-width=".8"/></svg>
<svg class="a" style="left:996.400px;top:180.31px" width="12" height="8" viewBox="0 0 12 8"><rect x=".5" y=".5" width="7.800" height="6.600" rx="1.400" fill="none" stroke="#777" stroke-width=".8"/><path d="M8.600 2.800l2.600-1.500v5l-2.600-1.500" fill="none" stroke="#777" stroke-width=".8"/></svg>
<div class="a" style="left:825.200px;top:202.38px;width:18.100px;height:18px;border-radius:4.200px;background:#2aa85c"></div>
<div class="t" style="left:828.69px;top:208.00px;font-size:8px;color:#fff;font-weight:bold;">SB</div>
<div class="t" style="left:851.20px;top:209.00px;font-size:8.2px;color:#2a2a2a;letter-spacing:0.109px;">Sevin... (Ortak oturum sahibi)</div>
<svg class="a" style="left:981px;top:205.98000000000002px" width="11" height="12" viewBox="0 0 11 12"><g fill="none" stroke="#ec6165" stroke-width=".8"><rect x="4" y="1" width="2.800" height="5.400" rx="1.400"/><path d="M2.600 5.200c0 1.900 1.200 3 2.800 3s2.800-1.100 2.800-3M5.400 8.200v2.100M4 10.400h2.800"/><path d="M10.300.2L.2 11" stroke-width=".9"/></g></svg>
<svg class="a" style="left:996.3000000000001px;top:206.18px" width="12" height="11" viewBox="0 0 12 11"><g fill="none" stroke="#ec6165" stroke-width=".8"><rect x=".5" y="2.600" width="8.200" height="6.200" rx="1.300"/><path d="M8.800 4.600l2.400-1.300v4.800l-2.400-1.300"/><path d="M11 .2L.6 10.800" stroke-width=".9"/></g></svg>
<svg class="a" style="left:964.75px;top:207.38px" width="11" height="8" viewBox="0 0 11 8"><path d="M2.600 7.300C1.300 7.300.5 6.400.5 5.400.5 4.300 1.300 3.600 2.300 3.500 2.500 1.900 3.800.7 5.400.7 6.800.7 7.900 1.500 8.400 2.800 9.700 2.900 10.500 3.800 10.500 5 10.500 6.300 9.600 7.300 8.300 7.300Z" fill="#fff" stroke="#8d8d96" stroke-width=".7"/><circle cx="5.400" cy="4.600" r="0.9" fill="#e0393e"/></svg>
<div class="a" style="left:825.200px;top:229.64999999999998px;width:18.100px;height:18px;border-radius:4.200px;background:#c5382c"></div>
<div class="t" style="left:828.69px;top:236.00px;font-size:8px;color:#fff;font-weight:bold;">AE</div>
<div class="t" style="left:851.20px;top:237.00px;font-size:8.2px;color:#2a2a2a;letter-spacing:-0.414px;">A.Ebru ERSOY</div>
<svg class="a" style="left:981px;top:233.25px" width="11" height="12" viewBox="0 0 11 12"><g fill="none" stroke="#ec6165" stroke-width=".8"><rect x="4" y="1" width="2.800" height="5.400" rx="1.400"/><path d="M2.600 5.200c0 1.900 1.200 3 2.800 3s2.800-1.100 2.800-3M5.400 8.200v2.100M4 10.400h2.800"/><path d="M10.300.2L.2 11" stroke-width=".9"/></g></svg>
<svg class="a" style="left:996.3000000000001px;top:233.45px" width="12" height="11" viewBox="0 0 12 11"><g fill="none" stroke="#ec6165" stroke-width=".8"><rect x=".5" y="2.600" width="8.200" height="6.200" rx="1.300"/><path d="M8.800 4.600l2.400-1.300v4.800l-2.400-1.300"/><path d="M11 .2L.6 10.800" stroke-width=".9"/></g></svg>
<div class="a" style="left:825.200px;top:256.92px;width:18.100px;height:18px;border-radius:4.200px;background:#1f9d78"></div>
<div class="t" style="left:829.14px;top:263.00px;font-size:8px;color:#fff;font-weight:bold;">Aç</div>
<div class="t" style="left:851.20px;top:264.00px;font-size:8.2px;color:#2a2a2a;letter-spacing:-0.053px;">abdullah çakmak</div>
<svg class="a" style="left:981px;top:260.52000000000004px" width="11" height="12" viewBox="0 0 11 12"><g fill="none" stroke="#ec6165" stroke-width=".8"><rect x="4" y="1" width="2.800" height="5.400" rx="1.400"/><path d="M2.600 5.200c0 1.900 1.200 3 2.800 3s2.800-1.100 2.800-3M5.400 8.200v2.100M4 10.400h2.800"/><path d="M10.300.2L.2 11" stroke-width=".9"/></g></svg>
<svg class="a" style="left:996.3000000000001px;top:260.72px" width="12" height="11" viewBox="0 0 12 11"><g fill="none" stroke="#ec6165" stroke-width=".8"><rect x=".5" y="2.600" width="8.200" height="6.200" rx="1.300"/><path d="M8.800 4.600l2.400-1.300v4.800l-2.400-1.300"/><path d="M11 .2L.6 10.800" stroke-width=".9"/></g></svg>
<div class="a" style="left:825.200px;top:284.19px;width:18.100px;height:18px;border-radius:4.200px;background:#d8561b"></div>
<div class="t" style="left:828.47px;top:290.00px;font-size:8px;color:#fff;font-weight:bold;">AD</div>
<div class="t" style="left:851.20px;top:291.00px;font-size:8.2px;color:#2a2a2a;letter-spacing:0.002px;">Aleksandra Dzięcielewska</div>
<svg class="a" style="left:998px;top:287.79px" width="11" height="12" viewBox="0 0 11 12"><g fill="none" stroke="#ec6165" stroke-width=".8"><rect x="4" y="1" width="2.800" height="5.400" rx="1.400"/><path d="M2.600 5.200c0 1.900 1.200 3 2.800 3s2.800-1.100 2.800-3M5.400 8.200v2.100M4 10.400h2.800"/><path d="M10.300.2L.2 11" stroke-width=".9"/></g></svg>
<div class="a" style="left:825.200px;top:311.46px;width:18.100px;height:18px;border-radius:4.200px;background:#f5a524"></div>
<div class="t" style="left:828.69px;top:317.00px;font-size:8px;color:#fff;font-weight:bold;">AS</div>
<div class="t" style="left:851.20px;top:318.00px;font-size:8.2px;color:#2a2a2a;letter-spacing:-0.098px;">Aleksandra Stankovska Jovanovs...</div>
<svg class="a" style="left:981px;top:315.06px" width="11" height="12" viewBox="0 0 11 12"><g fill="none" stroke="#ec6165" stroke-width=".8"><rect x="4" y="1" width="2.800" height="5.400" rx="1.400"/><path d="M2.600 5.200c0 1.900 1.200 3 2.800 3s2.800-1.100 2.800-3M5.400 8.200v2.100M4 10.400h2.800"/><path d="M10.300.2L.2 11" stroke-width=".9"/></g></svg>
<svg class="a" style="left:996.3000000000001px;top:315.26px" width="12" height="11" viewBox="0 0 12 11"><g fill="none" stroke="#ec6165" stroke-width=".8"><rect x=".5" y="2.600" width="8.200" height="6.200" rx="1.300"/><path d="M8.800 4.600l2.400-1.300v4.800l-2.400-1.300"/><path d="M11 .2L.6 10.800" stroke-width=".9"/></g></svg>
<div class="a" style="left:825.200px;top:338.73px;width:18.100px;height:18px;border-radius:4.200px;background:#27a95c"></div>
<div class="t" style="left:828.69px;top:345.00px;font-size:8px;color:#fff;font-weight:bold;">AS</div>
<div class="t" style="left:851.20px;top:346.00px;font-size:8.2px;color:#2a2a2a;letter-spacing:-0.402px;">ALEKSANDRA STOILKOVSKA</div>
<svg class="a" style="left:981px;top:342.33000000000004px" width="11" height="12" viewBox="0 0 11 12"><g fill="none" stroke="#ec6165" stroke-width=".8"><rect x="4" y="1" width="2.800" height="5.400" rx="1.400"/><path d="M2.600 5.200c0 1.900 1.200 3 2.800 3s2.800-1.100 2.800-3M5.400 8.200v2.100M4 10.400h2.800"/><path d="M10.300.2L.2 11" stroke-width=".9"/></g></svg>
<svg class="a" style="left:996.3000000000001px;top:342.53000000000003px" width="12" height="11" viewBox="0 0 12 11"><g fill="none" stroke="#ec6165" stroke-width=".8"><rect x=".5" y="2.600" width="8.200" height="6.200" rx="1.300"/><path d="M8.800 4.600l2.400-1.300v4.800l-2.400-1.300"/><path d="M11 .2L.6 10.800" stroke-width=".9"/></g></svg>
<div class="a" style="left:825.200px;top:366.0px;width:18.100px;height:18px;border-radius:4.200px;background:#1f9d78"></div>
<div class="t" style="left:828.92px;top:372.00px;font-size:8px;color:#fff;font-weight:bold;">AZ</div>
<div class="t" style="left:851.20px;top:373.00px;font-size:8.2px;color:#2a2a2a;letter-spacing:0.016px;">Alessandro Zeppelli</div>
<svg class="a" style="left:981px;top:369.6px" width="11" height="12" viewBox="0 0 11 12"><g fill="none" stroke="#ec6165" stroke-width=".8"><rect x="4" y="1" width="2.800" height="5.400" rx="1.400"/><path d="M2.600 5.200c0 1.900 1.200 3 2.800 3s2.800-1.100 2.800-3M5.400 8.200v2.100M4 10.400h2.800"/><path d="M10.300.2L.2 11" stroke-width=".9"/></g></svg>
<svg class="a" style="left:996.3000000000001px;top:369.8px" width="12" height="11" viewBox="0 0 12 11"><g fill="none" stroke="#ec6165" stroke-width=".8"><rect x=".5" y="2.600" width="8.200" height="6.200" rx="1.300"/><path d="M8.800 4.600l2.400-1.300v4.800l-2.400-1.300"/><path d="M11 .2L.6 10.800" stroke-width=".9"/></g></svg>
<div class="a" style="left:825.200px;top:393.27px;width:18.100px;height:18px;border-radius:4.200px;background:#f5a524"></div>
<div class="t" style="left:828.47px;top:399.00px;font-size:8px;color:#fff;font-weight:bold;">AD</div>
<div class="t" style="left:851.20px;top:400.00px;font-size:8.2px;color:#2a2a2a;letter-spacing:0.152px;">Andrijana Dimitrovska</div>
<svg class="a" style="left:981px;top:396.87px" width="11" height="12" viewBox="0 0 11 12"><g fill="none" stroke="#ec6165" stroke-width=".8"><rect x="4" y="1" width="2.800" height="5.400" rx="1.400"/><path d="M2.600 5.200c0 1.900 1.200 3 2.800 3s2.800-1.100 2.800-3M5.400 8.200v2.100M4 10.400h2.800"/><path d="M10.300.2L.2 11" stroke-width=".9"/></g></svg>
<svg class="a" style="left:996.3000000000001px;top:397.07px" width="12" height="11" viewBox="0 0 12 11"><g fill="none" stroke="#ec6165" stroke-width=".8"><rect x=".5" y="2.600" width="8.200" height="6.200" rx="1.300"/><path d="M8.800 4.600l2.400-1.300v4.800l-2.400-1.300"/><path d="M11 .2L.6 10.800" stroke-width=".9"/></g></svg>
<div class="a" style="left:825.200px;top:420.54px;width:18.100px;height:18px;border-radius:4.200px;background:#27a95c"></div>
<div class="t" style="left:828.47px;top:426.00px;font-size:8px;color:#fff;font-weight:bold;">AA</div>
<div class="t" style="left:851.20px;top:428.00px;font-size:8.2px;color:#2a2a2a;letter-spacing:-0.033px;">Anna Adamska</div>
<svg class="a" style="left:981px;top:424.14000000000004px" width="11" height="12" viewBox="0 0 11 12"><g fill="none" stroke="#ec6165" stroke-width=".8"><rect x="4" y="1" width="2.800" height="5.400" rx="1.400"/><path d="M2.600 5.200c0 1.900 1.200 3 2.800 3s2.800-1.100 2.800-3M5.400 8.200v2.100M4 10.400h2.800"/><path d="M10.300.2L.2 11" stroke-width=".9"/></g></svg>
<svg class="a" style="left:996.3000000000001px;top:424.34000000000003px" width="12" height="11" viewBox="0 0 12 11"><g fill="none" stroke="#ec6165" stroke-width=".8"><rect x=".5" y="2.600" width="8.200" height="6.200" rx="1.300"/><path d="M8.800 4.600l2.400-1.300v4.800l-2.400-1.300"/><path d="M11 .2L.6 10.800" stroke-width=".9"/></g></svg>
<div class="a" style="left:825.200px;top:447.81px;width:18.100px;height:18px;border-radius:4.200px;background:#1f9d78"></div>
<div class="t" style="left:828.25px;top:454.00px;font-size:8px;color:#fff;font-weight:bold;">AG</div>
<div class="t" style="left:851.20px;top:455.00px;font-size:8.2px;color:#2a2a2a;letter-spacing:0.041px;">Anna Gruchmann</div>
<svg class="a" style="left:981px;top:451.41px" width="11" height="12" viewBox="0 0 11 12"><g fill="none" stroke="#ec6165" stroke-width=".8"><rect x="4" y="1" width="2.800" height="5.400" rx="1.400"/><path d="M2.600 5.200c0 1.900 1.200 3 2.800 3s2.800-1.100 2.800-3M5.400 8.200v2.100M4 10.400h2.800"/><path d="M10.300.2L.2 11" stroke-width=".9"/></g></svg>
<svg class="a" style="left:996.3000000000001px;top:451.61px" width="12" height="11" viewBox="0 0 12 11"><g fill="none" stroke="#ec6165" stroke-width=".8"><rect x=".5" y="2.600" width="8.200" height="6.200" rx="1.300"/><path d="M8.800 4.600l2.400-1.300v4.800l-2.400-1.300"/><path d="M11 .2L.6 10.800" stroke-width=".9"/></g></svg>
<div class="a" style="left:825.200px;top:475.08px;width:18.100px;height:18px;border-radius:4.200px;background:#c5382c"></div>
<div class="t" style="left:828.92px;top:481.00px;font-size:8px;color:#fff;font-weight:bold;">AŻ</div>
<div class="t" style="left:851.20px;top:482.00px;font-size:8.2px;color:#2a2a2a;letter-spacing:0.161px;">Anna Żuber</div>
<svg class="a" style="left:981px;top:478.68px" width="11" height="12" viewBox="0 0 11 12"><g fill="none" stroke="#ec6165" stroke-width=".8"><rect x="4" y="1" width="2.800" height="5.400" rx="1.400"/><path d="M2.600 5.200c0 1.900 1.200 3 2.800 3s2.800-1.100 2.800-3M5.400 8.200v2.100M4 10.400h2.800"/><path d="M10.300.2L.2 11" stroke-width=".9"/></g></svg>
<svg class="a" style="left:996.3000000000001px;top:478.88px" width="12" height="11" viewBox="0 0 12 11"><g fill="none" stroke="#ec6165" stroke-width=".8"><rect x=".5" y="2.600" width="8.200" height="6.200" rx="1.300"/><path d="M8.800 4.600l2.400-1.300v4.800l-2.400-1.300"/><path d="M11 .2L.6 10.800" stroke-width=".9"/></g></svg>
<div class="a" style="left:825.200px;top:502.35px;width:18.100px;height:18px;border-radius:4.200px;background:#f5a524"></div>
<svg class="a" style="left:981px;top:505.95000000000005px" width="11" height="12" viewBox="0 0 11 12"><g fill="none" stroke="#ec6165" stroke-width=".8"><rect x="4" y="1" width="2.800" height="5.400" rx="1.400"/><path d="M2.600 5.200c0 1.900 1.200 3 2.800 3s2.800-1.100 2.800-3M5.400 8.200v2.100M4 10.400h2.800"/><path d="M10.300.2L.2 11" stroke-width=".9"/></g></svg>
<svg class="a" style="left:996.3000000000001px;top:506.15000000000003px" width="12" height="11" viewBox="0 0 12 11"><g fill="none" stroke="#ec6165" stroke-width=".8"><rect x=".5" y="2.600" width="8.200" height="6.200" rx="1.300"/><path d="M8.800 4.600l2.400-1.300v4.800l-2.400-1.300"/><path d="M11 .2L.6 10.800" stroke-width=".9"/></g></svg>
</div></div>
<div class="a" style="left:811px;top:510px;width:213px;height:35px;overflow:hidden"><div class="a" style="left:-811px;top:-510px;width:1100px;height:576px"><div class="a" style="left:812.4px;top:517.5px;width:53.60000000000002px;height:16.2px;background:#fff;border:.8px solid #b9bcc4;border-radius:4.500px"></div>
<div class="t" style="left:819.60px;top:523.00px;font-size:8.2px;color:#262626;letter-spacing:-0.112px;">Davet Edin</div>
<div class="a" style="left:868.3px;top:517.5px;width:47.700000000000045px;height:16.2px;background:#fff;border:.8px solid #b9bcc4;border-radius:4.500px"></div>
<div class="t" style="left:874.50px;top:523.00px;font-size:8.2px;color:#262626;letter-spacing:-0.080px;">Sesimi aç</div>
<div class="a" style="left:919px;top:517.5px;width:141px;height:16.2px;background:#fff;border:.8px solid #b9bcc4;border-radius:4.500px"></div>
<div class="t" style="left:924.70px;top:523.00px;font-size:8.2px;color:#262626;letter-spacing:-0.064px;">Yeniden Oturum Sahibi Olma</div>
</div></div>
<!-- sec_tb -->
<div class="a" style="left:0px;top:505px;width:811px;height:39px;background:#000;"></div>
<svg class="a" style="left:27px;top:511px" width="15" height="18" viewBox="0 0 15 18"><g fill="none" stroke="#f2f2f2" stroke-width="1.100"><rect x="5" y="1.500" width="5" height="8.500" rx="2.500"/><path d="M2.500 8c0 3 2.200 4.800 5 4.800s5-1.800 5-4.800M7.500 12.800v3M5 16h5"/></g><path d="M13.500.8L2 17" stroke="#ea3a5c" stroke-width="1.400"/></svg>
<div class="t" style="left:29.00px;top:532.00px;font-size:8.2px;color:#f2f2f2;letter-spacing:-0.738px;transform:scaleX(0.9483);transform-origin:0 0;">Ses</div>
<svg class="a" style="left:52.5px;top:517.2px" width="6" height="4" viewBox="0 0 6 4"><path d="M.5 3.300l2.500-2.500 2.500 2.500" fill="none" stroke="#e8e8e8" stroke-width="1"/></svg>
<svg class="a" style="left:88px;top:511.500px" width="19" height="17" viewBox="0 0 19 17"><g fill="none" stroke="#f2f2f2" stroke-width="1.100"><rect x="1" y="4" width="11.500" height="9" rx="2"/><path d="M12.800 7.200l4.600-2.600v8l-4.600-2.600"/></g><path d="M15.500.8L3.500 16.200" stroke="#ea3a5c" stroke-width="1.400"/></svg>
<div class="t" style="left:89.00px;top:532.00px;font-size:8.2px;color:#f2f2f2;letter-spacing:-0.706px;">Video</div>
<svg class="a" style="left:118.5px;top:517.2px" width="6" height="4" viewBox="0 0 6 4"><path d="M.5 3.300l2.500-2.500 2.500 2.500" fill="none" stroke="#e8e8e8" stroke-width="1"/></svg>
<svg class="a" style="left:197px;top:513px" width="14" height="14" viewBox="0 0 14 14"><g fill="none" stroke="#f2f2f2" stroke-width="1.100"><circle cx="5" cy="3.800" r="2.400"/><path d="M.8 12.600c0-2.800 1.600-4.400 4.200-4.400s4.200 1.600 4.200 4.400z"/><circle cx="10.300" cy="5.800" r="1.700"/><path d="M10.600 9.200c1.800.1 2.700 1.300 2.700 3.400h-2.400"/></g></svg>
<div class="t" style="left:215.00px;top:515.00px;font-size:8px;color:#f2f2f2;letter-spacing:-0.674px;">130</div>
<svg class="a" style="left:236px;top:517.2px" width="6" height="4" viewBox="0 0 6 4"><path d="M.5 3.300l2.500-2.500 2.500 2.500" fill="none" stroke="#e8e8e8" stroke-width="1"/></svg>
<div class="t" style="left:183.50px;top:532.00px;font-size:8.2px;color:#f2f2f2;letter-spacing:-0.046px;">Katılımcılar</div>
<svg class="a" style="left:269.500px;top:513.500px" width="14" height="14" viewBox="0 0 14 14"><path d="M3 1h8a2 2 0 0 1 2 2v5.500a2 2 0 0 1-2 2h-4.500l-3 2.800v-2.800h-.5a2 2 0 0 1-2-2v-5.500a2 2 0 0 1 2-2z" fill="none" stroke="#f2f2f2" stroke-width="1.100"/><circle cx="4.300" cy="5.800" r=".8" fill="#f2f2f2"/><circle cx="7" cy="5.800" r=".8" fill="#f2f2f2"/><circle cx="9.700" cy="5.800" r=".8" fill="#f2f2f2"/></svg>
<div class="a" style="left:279.5px;top:508px;width:11px;height:11px;background:#e8373c;border-radius:50%"></div>
<div class="t" style="left:283.00px;top:510.00px;font-size:7.6px;color:#fff;font-weight:bold;">2</div>
<svg class="a" style="left:296px;top:517.2px" width="6" height="4" viewBox="0 0 6 4"><path d="M.5 3.300l2.500-2.500 2.500 2.500" fill="none" stroke="#e8e8e8" stroke-width="1"/></svg>
<div class="t" style="left:265.00px;top:532.00px;font-size:8.2px;color:#f2f2f2;letter-spacing:-0.198px;">Sohbet</div>
<svg class="a" style="left:325.500px;top:513px" width="17" height="14" viewBox="0 0 17 14"><path d="M8.500 13c-4.500-3-7.700-5.600-7.700-8.600a3.800 3.800 0 0 1 7.700-1.200 3.800 3.800 0 0 1 7.700 1.200c0 3-3.200 5.600-7.700 8.600z" fill="none" stroke="#f2f2f2" stroke-width="1.100"/></svg>
<div class="t" style="left:318.00px;top:532.00px;font-size:8.2px;color:#f2f2f2;letter-spacing:0.023px;">Tepki ver</div>
<div class="a" style="left:385.2px;top:513px;width:17px;height:12.8px;background:#1fe07c;border-radius:3px"></div>
<svg class="a" style="left:389.700px;top:515.400px" width="8" height="8" viewBox="0 0 9 9"><path d="M4.500.4l4 4.200h-2.600v4h-2.800v-4h-2.600z" fill="#0a1a10"/></svg>
<div class="t" style="left:382.50px;top:532.00px;font-size:8.2px;color:#f2f2f2;letter-spacing:-0.423px;">Paylaş</div>
<svg class="a" style="left:449.500px;top:510.500px" width="17" height="18" viewBox="0 0 17 18"><path d="M7 3c.8 4.200 2.200 5.800 6.600 6.800-4.400 1-5.800 2.600-6.600 6.800-.8-4.200-2.200-5.800-6.600-6.800 4.400-1 5.800-2.600 6.600-6.800z" fill="#f2f2f2"/><path d="M13.500.5c.4 2 1 2.700 3 3.200-2 .5-2.600 1.200-3 3.200-.4-2-1-2.700-3-3.200 2-.5 2.600-1.200 3-3.200z" fill="#f2f2f2"/></svg>
<div class="t" style="left:432.00px;top:532.00px;font-size:8.2px;color:#f2f2f2;letter-spacing:0.003px;">AI Companion</div>
<svg class="a" style="left:513px;top:513px" width="13" height="14" viewBox="0 0 13 14"><g fill="none" stroke="#f2f2f2" stroke-width="1.100"><path d="M5 1h-2.500a1.700 1.700 0 0 0-1.700 1.700v1.600a1.700 1.700 0 0 0 1.700 1.700h.8a1.700 1.700 0 0 0 1.700-1.700z" /><circle cx="9.800" cy="3.500" r="2.300"/><circle cx="3.200" cy="10.500" r="2.300"/><path d="M8 13h2.500a1.700 1.700 0 0 0 1.700-1.700v-1.600a1.700 1.700 0 0 0-1.700-1.700h-.8a1.700 1.700 0 0 0-1.700 1.700z"/></g></svg>
<div class="t" style="left:494.00px;top:532.00px;font-size:8.2px;color:#f2f2f2;letter-spacing:0.047px;">Uygulamalar</div>
<svg class="a" style="left:570.500px;top:513px" width="19" height="14" viewBox="0 0 19 14"><rect x="1" y="1" width="16" height="11" rx="2" fill="none" stroke="#f2f2f2" stroke-width="1.100"/><rect x="10" y="10" width="8" height="3.200" rx="1.500" fill="#f2f2f2" stroke="#000" stroke-width=".8"/></svg>
<div class="t" style="left:553.00px;top:532.00px;font-size:8.2px;color:#f2f2f2;letter-spacing:-0.123px;">Beyaz Tahtalar</div>
<div class="a" style="left:631px;top:512.5px;width:16px;height:16px;background:#8f8f8f;border-radius:50%"></div>
<div class="t" style="left:636.40px;top:517.00px;font-size:9px;color:#2a2a2a;font-weight:bold;">T</div>
<div class="t" style="left:627.00px;top:532.00px;font-size:8.2px;color:#f2f2f2;letter-spacing:-0.312px;">Türkçe</div>
<svg class="a" style="left:684px;top:512px" width="17" height="17" viewBox="0 0 17 17"><circle cx="8.500" cy="8.500" r="7.600" fill="none" stroke="#f2f2f2" stroke-width="1.100"/><circle cx="5" cy="8.500" r="1" fill="#f2f2f2"/><circle cx="8.500" cy="8.500" r="1" fill="#f2f2f2"/><circle cx="12" cy="8.500" r="1" fill="#f2f2f2"/></svg>
<div class="t" style="left:673.50px;top:532.00px;font-size:8.2px;color:#f2f2f2;letter-spacing:-0.078px;">Daha fazla</div>
<svg class="a" style="left:769px;top:510.500px" width="19" height="19" viewBox="0 0 19 19"><path d="M11 1.500h6v15h-6" fill="none" stroke="#e8373c" stroke-width="1.400"/><path d="M11.500 2.500l4-1v15.500l-4-1z" fill="#e8373c" opacity=".55"/><circle cx="6.600" cy="3.600" r="1.700" fill="#f2f2f2"/><path d="M5.600 6.200l-3 1.600-1 3.200M5.600 6.200l2.600 1 1.200 2.600 2.400.4M5.600 6.200l-.4 4.600 2.600 2.600.6 4M5.200 10.800l-1.600 3.400-2.600 2.600" fill="none" stroke="#f2f2f2" stroke-width="1.300" stroke-linecap="round" stroke-linejoin="round"/></svg>
<div class="t" style="left:770.50px;top:532.00px;font-size:8.2px;color:#f2f2f2;letter-spacing:-0.188px;">Ayrıl</div>
<!-- sec_task -->
<div class="a" style="left:0px;top:543.7px;width:1024px;height:32.3px;background:linear-gradient(90deg,#15302a 0,#14302a 30%,#132c26 60%,#122923 100%);"></div>
<svg class="a" style="left:13px;top:549px" width="19" height="17" viewBox="0 0 19 17"><path d="M4.800 15.500a3.800 3.800 0 0 1-.4-7.600 5 5 0 0 1 9.600-.6 4.100 4.100 0 0 1 .2 8.200z" fill="#c9d8ee"/><path d="M7 15.500a3.400 3.400 0 0 1 .4-6.600 4.200 4.200 0 0 1 7.400.8 3 3 0 0 1-.4 5.800z" fill="#e9f0fa"/></svg>
<div class="a" style="left:21.5px;top:548px;width:8.6px;height:8.6px;background:#d62f2f;border-radius:50%"></div>
<div class="t" style="left:24.40px;top:550.00px;font-size:6.4px;color:#fff;font-weight:bold;">1</div>
<div class="t" style="left:34.25px;top:551.00px;font-size:8px;color:#f4f4f4;letter-spacing:-0.713px;">8°C</div>
<div class="t" style="left:34.25px;top:562.00px;font-size:8px;color:#f4f4f4;letter-spacing:0.090px;">Bulutlu</div>
<div class="a" style="left:282.5px;top:552.5px;width:7.7px;height:7.7px;background:linear-gradient(135deg,#5fd0ff,#1f9fe8);border-radius:.8px"></div>
<div class="a" style="left:290.8px;top:552.5px;width:7.7px;height:7.7px;background:linear-gradient(135deg,#5fd0ff,#1f9fe8);border-radius:.8px"></div>
<div class="a" style="left:282.5px;top:560.8px;width:7.7px;height:7.7px;background:linear-gradient(135deg,#5fd0ff,#1f9fe8);border-radius:.8px"></div>
<div class="a" style="left:290.8px;top:560.8px;width:7.7px;height:7.7px;background:linear-gradient(135deg,#5fd0ff,#1f9fe8);border-radius:.8px"></div>
<div class="a" style="left:307.5px;top:550px;width:145px;height:20px;background:#f1f3f2;border-radius:10px"></div>
<svg class="a" style="left:314.500px;top:554.500px" width="11" height="11" viewBox="0 0 11 11"><circle cx="4.500" cy="4.500" r="3.500" fill="none" stroke="#2a2a2a" stroke-width="1.100"/><path d="M7.200 7.200l3 3" stroke="#2a2a2a" stroke-width="1.300"/></svg>
<div class="t" style="left:332.25px;top:557.00px;font-size:8.2px;color:#666;letter-spacing:-0.131px;">Ara</div>
<svg class="a" style="left:420px;top:552px" width="28" height="17" viewBox="0 0 28 17"><ellipse cx="14" cy="14" rx="13" ry="2.600" fill="#e8c89a"/><path d="M2 11l8-5 5 4-8 4.500z" fill="#4f9a5a"/><path d="M4 10.500l6-3.600 3 2.400-6 3.400z" fill="#f4f4ea"/><path d="M9 8l5-5 1.400 1.200-5 5z" fill="#f2a73a"/><rect x="17.500" y="3" width="8.500" height="11.500" rx="2.600" fill="#2d7be0"/><rect x="19.600" y="1" width="4.200" height="3" rx="1.200" fill="#4a97f2"/><rect x="18.800" y="8.600" width="6" height="4" rx="1" fill="#6db0fa"/></svg>
<div class="a" style="left:466px;top:553px;width:11px;height:10.5px;background:#f0f0f0;border-radius:1.500px"></div>
<div class="a" style="left:461px;top:557px;width:11.5px;height:10.5px;background:#8a8a8a;border-radius:1.500px;border:.6px solid #5a5a5a"></div>
<svg class="a" style="left:489.500px;top:552px" width="17" height="17" viewBox="0 0 17 17"><defs><linearGradient id="cp1" x1="0" y1="0" x2="1" y2="1"><stop offset="0" stop-color="#2fa8f0"/><stop offset=".35" stop-color="#4a6af0"/><stop offset=".65" stop-color="#d84a9a"/><stop offset="1" stop-color="#f5a52a"/></linearGradient></defs><path d="M6 1.500h5c1.400 0 2.200.8 2.600 2l.8 2.500h.6c1.200 0 1.800 1 1.400 2.200l-1.600 5c-.4 1.400-1.400 2.300-2.800 2.300h-5c-1.400 0-2.200-.8-2.600-2l-.8-2.500h-.6c-1.200 0-1.800-1-1.400-2.200l1.600-5c.4-1.400 1.400-2.300 2.800-2.300z" fill="url(#cp1)"/><path d="M7.200 5h3l1.600 7h-3z" fill="#132c26" opacity=".55"/></svg>
<div class="a" style="left:528.5px;top:551.8px;width:4.6px;height:4.6px;background:#7b83eb;border-radius:50%"></div>
<div class="a" style="left:533.2px;top:553.4px;width:3.2px;height:3.2px;background:#5059c9;border-radius:50%"></div>
<div class="a" style="left:526.5px;top:556.6px;width:8px;height:9.5px;background:#7b83eb;border-radius:1.500px 1.500px 4px 4px"></div>
<div class="a" style="left:531.5px;top:557.2px;width:5.2px;height:7.5px;background:#5059c9;border-radius:1px 1px 3px 3px"></div>
<div class="a" style="left:520.8px;top:555.6px;width:8.2px;height:8.2px;background:#f4f4fb;border-radius:1.200px"></div>
<div class="t" style="left:522.90px;top:557.00px;font-size:6.8px;color:#4b53bc;font-weight:bold;">T</div>
<svg class="a" style="left:549.500px;top:552px" width="17" height="17" viewBox="0 0 17 17"><circle cx="8" cy="9" r="7.500" fill="#e33b2e"/><path d="M8 9l-6.500 3.700a7.500 7.500 0 0 0 6.500 3.800z" fill="#2da94f"/><path d="M8 9v7.500a7.500 7.500 0 0 0 6.500-11.200z" fill="#fbbc0a"/><path d="M8 9l6.500-3.700a7.500 7.500 0 0 0-13 0z" fill="#e33b2e"/><circle cx="8" cy="9" r="3.400" fill="#fff"/><circle cx="8" cy="9" r="2.600" fill="#3f86f5"/><circle cx="13" cy="4.200" r="4.300" fill="#4aa85a"/></svg>
<div class="t" style="left:560.40px;top:553.00px;font-size:6px;color:#fff;font-weight:bold;">A</div>
<div class="a" style="left:555.5px;top:572px;width:4px;height:1.3px;background:#9aa;"></div>
<svg class="a" style="left:579.500px;top:552.500px" width="17" height="17" viewBox="0 0 17 17"><defs><radialGradient id="ff1" cx=".6" cy=".3" r=".8"><stop offset="0" stop-color="#ffd43a"/><stop offset=".5" stop-color="#ff7a1a"/><stop offset="1" stop-color="#e3265a"/></radialGradient></defs><circle cx="8.500" cy="8.800" r="7.800" fill="url(#ff1)"/><circle cx="8.800" cy="9" r="4" fill="#6a3ad8"/><path d="M2 5c2-1 4 0 5 2 2-.5 3.500.5 4 2-1.500-.6-3-.2-3.500 1-.6 1.400.4 3 2.500 3 2 0 3.600-1.600 3.800-4 .8 3.600-1.600 7-5.400 7.300-4.200.3-7.400-3-7.400-7 0-1.600.4-3 1-4.300z" fill="#ff8a1a"/></svg>
<div class="a" style="left:608px;top:552.5px;width:17.5px;height:16px;background:#d9e2e8;border-radius:1.500px;border:.8px solid #7a8a92"></div>
<div class="a" style="left:609.5px;top:554px;width:14.5px;height:6.5px;background:#6fa9d8;"></div>
<div class="a" style="left:609.5px;top:560.5px;width:14.5px;height:3px;background:#d9a55a;"></div>
<div class="a" style="left:611px;top:565px;width:11.5px;height:1.2px;background:#555;"></div>
<div class="a" style="left:611px;top:554.5px;width:3px;height:2.5px;background:#e5c040;"></div>
<svg class="a" style="left:636.500px;top:552px" width="18" height="17" viewBox="0 0 18 17"><path d="M9 .8l8 7.700-8 7.700-8-7.700z" fill="#e8262c"/><path d="M9 .8l8 7.700h-16z" fill="#ff5a4a"/><path d="M9 5l3.600 3.500-3.600 3.500-3.600-3.500z" fill="#fff" opacity=".18"/></svg>
<div class="a" style="left:643.5px;top:572px;width:4px;height:1.3px;background:#9aa;"></div>
<div class="a" style="left:666px;top:554px;width:8px;height:4px;background:#f0b423;border-radius:1px"></div>
<div class="a" style="left:666px;top:555.5px;width:17.5px;height:12.5px;background:#fdc83a;border-radius:1.500px"></div>
<div class="a" style="left:666px;top:562px;width:17.5px;height:6px;background:#e8a81a;border-radius:0 0 1.500px 1.500px"></div>
<div class="a" style="left:670.5px;top:563.5px;width:8.5px;height:2.5px;background:#3c8ae0;border-radius:.6px"></div>
<svg class="a" style="left:696.500px;top:552.500px" width="16" height="17" viewBox="0 0 16 17"><ellipse cx="8" cy="8.500" rx="7.500" ry="8" fill="#f0202c"/><ellipse cx="8" cy="8.500" rx="3.400" ry="5.800" fill="#132c26"/></svg>
<div class="a" style="left:719.5px;top:546.5px;width:27.5px;height:28px;background:rgba(255,255,255,.08);border-radius:3px;border:.6px solid rgba(255,255,255,.1)"></div>
<div class="a" style="left:725.5px;top:552.3px;width:16.5px;height:16.5px;background:#1a6cf5;border-radius:6.500px"></div>
<div class="t" style="left:729.00px;top:559.00px;font-size:4.4px;color:#e8f0ff;font-weight:bold;letter-spacing:-0.396px;transform:scaleX(0.9321);transform-origin:0 0;">zoom</div>
<div class="a" style="left:728px;top:571.8px;width:11.5px;height:1.6px;background:#4cc2ff;border-radius:1px"></div>
<svg class="a" style="left:866px;top:557.400px" width="8" height="5" viewBox="0 0 8 5"><path d="M.6 4.300l3.400-3.400 3.400 3.400" fill="none" stroke="#f0f0f0" stroke-width="1.300"/></svg>
<svg class="a" style="left:886.500px;top:554px" width="9" height="12" viewBox="0 0 9 12"><rect x="2.800" y=".6" width="3.400" height="6.400" rx="1.700" fill="#5ab4f0"/><path d="M1.200 5.200c0 2.200 1.400 3.400 3.300 3.400s3.300-1.200 3.300-3.400M4.500 8.600v2.200M2.800 11h3.400" fill="none" stroke="#5ab4f0" stroke-width=".9"/></svg>
<svg class="a" style="left:906.500px;top:556px" width="11" height="9" viewBox="0 0 11 9"><g fill="none" stroke="#f0f0f0" stroke-width="1"><path d="M.8 3.200a6.800 6.800 0 0 1 9.400 0M2.400 5a4.400 4.400 0 0 1 6.200 0M4 6.800a2.200 2.200 0 0 1 3 0"/></g><circle cx="5.500" cy="8" r=".8" fill="#f0f0f0"/></svg>
<svg class="a" style="left:921.500px;top:555.500px" width="11" height="10" viewBox="0 0 11 10"><path d="M.8 3.400h2l2.600-2.400v8l-2.600-2.400h-2z" fill="none" stroke="#f0f0f0" stroke-width=".9"/><path d="M7 3.200a2.600 2.600 0 0 1 0 3.600M8.600 1.800a4.600 4.600 0 0 1 0 6.400" fill="none" stroke="#f0f0f0" stroke-width=".9"/></svg>
<svg class="a" style="left:938px;top:556px" width="12" height="9" viewBox="0 0 12 9"><rect x=".6" y="1.600" width="9.400" height="6.200" rx="1.600" fill="none" stroke="#f0f0f0" stroke-width=".9"/><rect x="2" y="3" width="6.600" height="3.400" rx=".8" fill="#f0f0f0"/><path d="M10.800 3.600v2.200" stroke="#f0f0f0" stroke-width="1"/><path d="M2.600.6l1.600 1.500h-1l1.400 1.600" fill="none" stroke="#f0f0f0" stroke-width=".7"/></svg>
<div class="t" style="left:975.70px;top:551.00px;font-size:7.9px;color:#f4f4f4;letter-spacing:-0.117px;">20:32</div>
<div class="t" style="left:961.30px;top:562.00px;font-size:7.9px;color:#f4f4f4;letter-spacing:-0.181px;">3.12.2024</div>
<svg class="a" style="left:1000.600px;top:554.600px" width="9.400" height="11" viewBox="0 0 11 13"><path d="M5.500.8c-2.400 0-3.800 1.800-3.800 4v2.800l-1.200 2.200h10l-1.200-2.200v-2.800c0-2.200-1.400-4-3.800-4z" fill="#8fd6ff"/><path d="M4 10.800a1.500 1.500 0 0 0 3 0z" fill="#8fd6ff"/></svg>
</div>
</body></html>
